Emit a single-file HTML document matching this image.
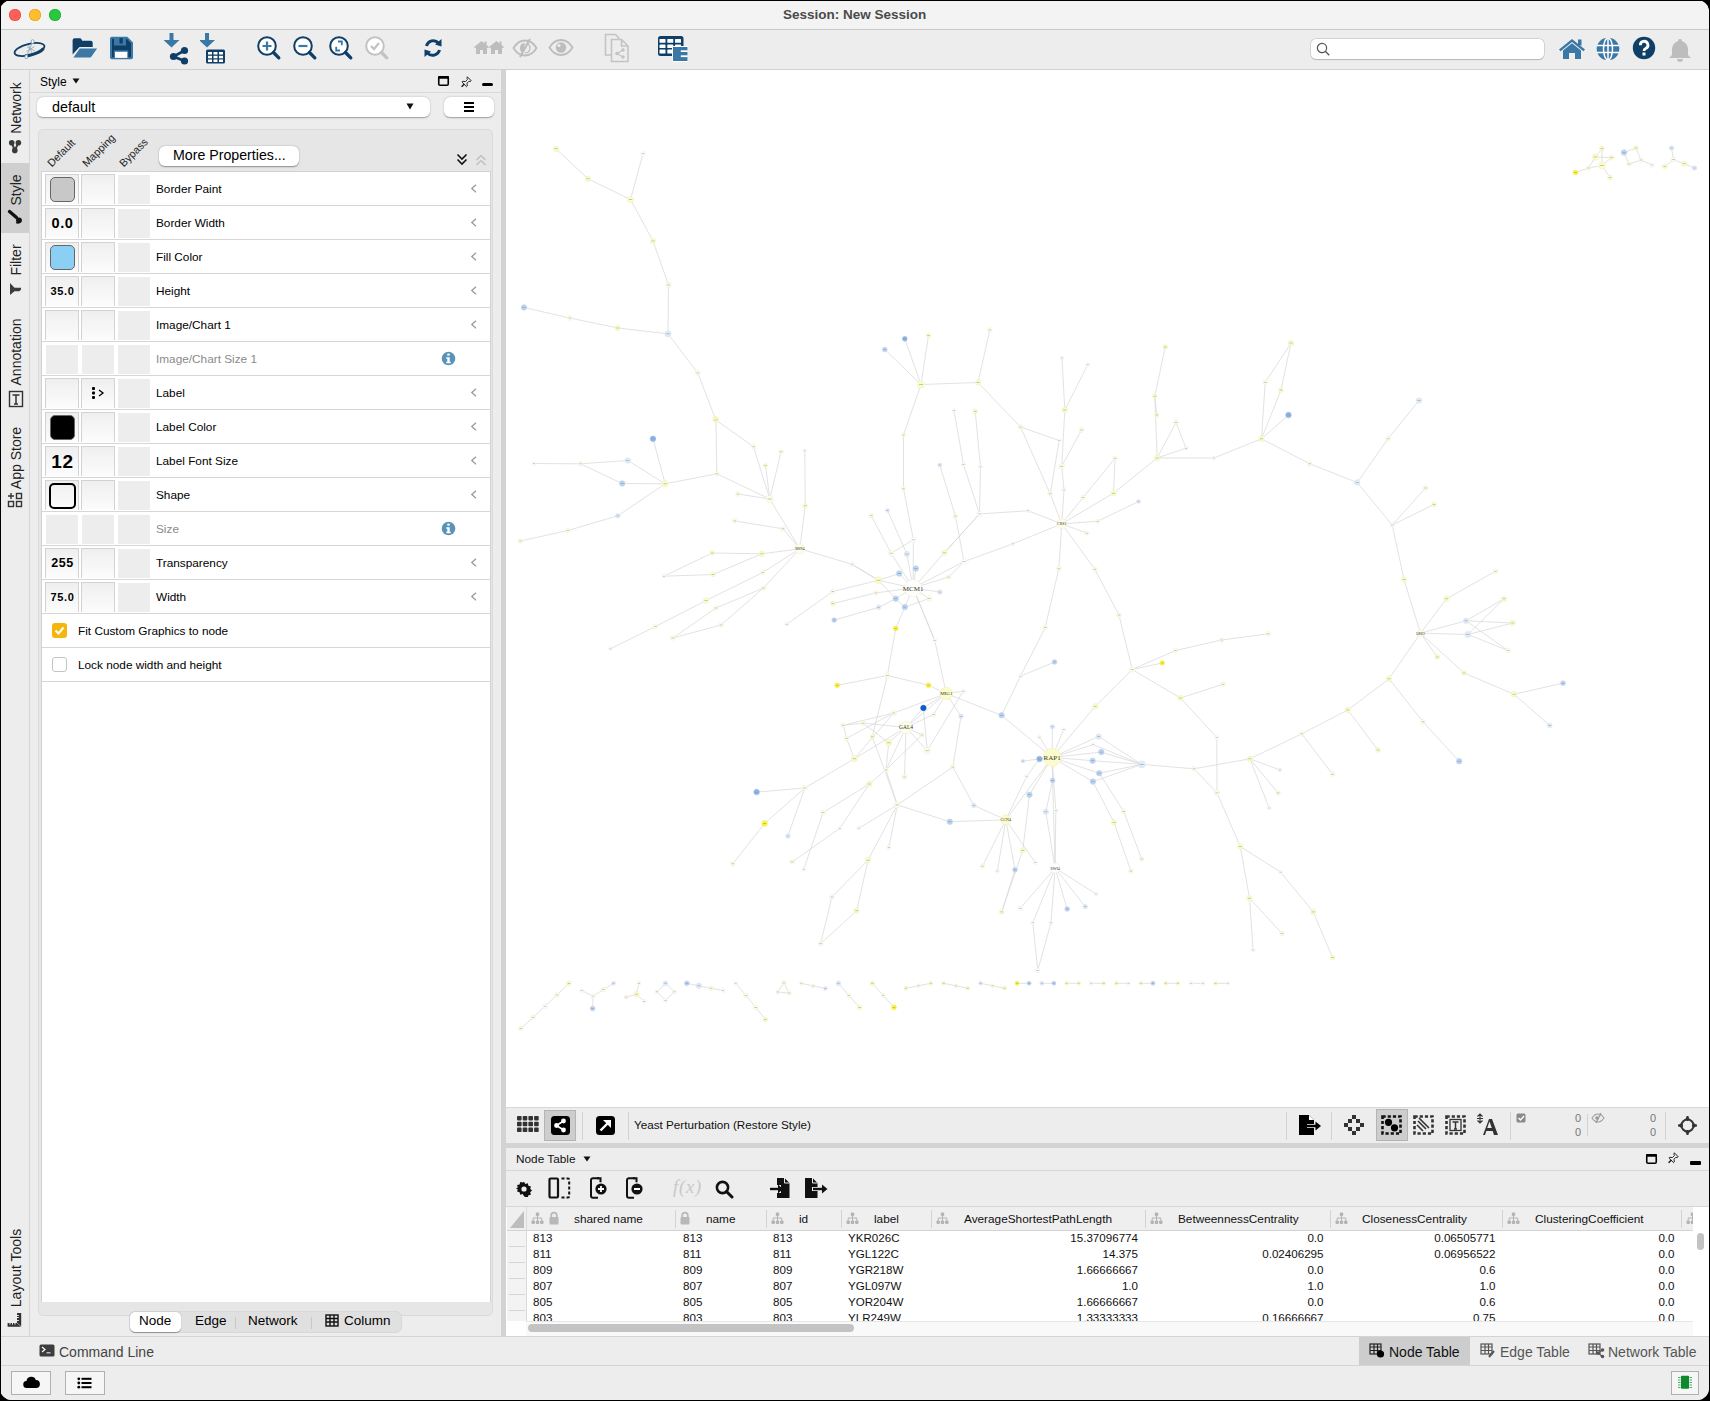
<!DOCTYPE html>
<html><head><meta charset="utf-8">
<style>
*{box-sizing:border-box;margin:0;padding:0}
html,body{width:1710px;height:1401px;overflow:hidden;background:#000}
body{position:relative;font-family:"Liberation Sans",sans-serif;color:#000}
.a{position:absolute}
#win{position:absolute;left:0;top:0;width:1709px;height:1400px;border-radius:12px;overflow:hidden;background:#ededed}
.t{position:absolute;white-space:nowrap;line-height:1}
</style></head><body>
<div id="win">
 <!-- title bar -->
 <div class="a" style="left:0;top:0;width:1709px;height:30px;background:#f3f3f3;border-bottom:1px solid #c9c9c9"></div>
 <div class="a" style="left:9px;top:9px;width:12px;height:12px;border-radius:50%;background:#fe5f57;box-shadow:inset 0 0 0 0.6px #e2463f"></div>
 <div class="a" style="left:29px;top:9px;width:12px;height:12px;border-radius:50%;background:#febc2e;box-shadow:inset 0 0 0 0.6px #df9d1b"></div>
 <div class="a" style="left:49px;top:9px;width:12px;height:12px;border-radius:50%;background:#28c840;box-shadow:inset 0 0 0 0.6px #1aab29"></div>
 <div class="t" style="left:783px;top:8px;font-size:13.5px;font-weight:bold;color:#4a4a4a">Session: New Session</div>
 <!-- toolbar -->
 <div class="a" style="left:0;top:30px;width:1709px;height:40px;background:#ededed;border-bottom:1px solid #d0d0d0"></div>
 <!-- left strip -->
 <div class="a" style="left:0;top:70px;width:30px;height:1266px;background:#ededed;border-right:1px solid #d6d6d6"></div>
 <!-- style panel -->
 <div class="a" style="left:30px;top:70px;width:471px;height:1266px;background:#ededed"></div>
 <!-- splitter -->
 <div class="a" style="left:501px;top:70px;width:5px;height:1266px;background:#d3d3d3"></div>
 <!-- canvas -->
 <div class="a" id="canvas" style="left:506px;top:70px;width:1203px;height:1038px;background:#fff;border-bottom:1px solid #d8d8d8"></div>
 <!-- net toolbar -->
 <div class="a" style="left:506px;top:1108px;width:1203px;height:35px;background:#ededed"></div>
 <div class="a" style="left:506px;top:1143px;width:1203px;height:5px;background:#d3d3d3"></div>
 <!-- table panel -->
 <div class="a" style="left:506px;top:1148px;width:1203px;height:23px;background:#ededed;border-bottom:1px solid #d6d6d6"></div>
 <div class="a" style="left:506px;top:1171px;width:1203px;height:36px;background:#ededed;border-bottom:1px solid #d6d6d6"></div>
 <div class="a" style="left:506px;top:1207px;width:1203px;height:129px;background:#fff"></div>
 <!-- command bar -->
 <div class="a" style="left:0;top:1336px;width:1709px;height:30px;background:#ededed;border-top:1px solid #d4d4d4;border-bottom:1px solid #d4d4d4"></div>
 <div class="a" style="left:0;top:1366px;width:1709px;height:34px;background:#ededed"></div>
<div class="t" style="left:40px;top:76px;font-size:12px;color:#000;">Style</div>
<svg class="a" style="left:72px;top:78px" width="8" height="6"><path d="M0.5 0.5h7l-3.5 5z" fill="#111"/></svg>
<svg class="a" style="left:437px;top:75px" width="13" height="12"><rect x="1.75" y="1.75" width="9.5" height="8.5" rx="1.3" fill="none" stroke="#000" stroke-width="1.6"/><rect x="1" y="1" width="11" height="2.8" rx="1" fill="#000"/></svg>
<svg class="a" style="left:460.5px;top:75.5px" width="12" height="12"><path d="M6.3 0.8L10.2 4.7 9.1 5.6 8 5.2 6 7.2 6.3 10 5.6 10.7 0.9 6 1.6 5.3 4.4 5.6 6.4 3.6 6 2.2Z" fill="none" stroke="#111" stroke-width="0.9" stroke-linejoin="round"/><path d="M3.4 8L0.6 10.8" stroke="#111" stroke-width="1.3"/></svg>
<div class="a" style="left:482px;top:83px;width:11px;height:3px;background:#000;border-radius:1.5px"></div>
<div class="a" style="left:30px;top:92px;width:471px;height:1px;background:#d9d9d9"></div>
<div class="a" style="left:37px;top:97px;width:393px;height:20px;background:#fff;border-radius:6px;box-shadow:0 0.5px 1.5px rgba(0,0,0,0.35)"></div>
<div class="t" style="left:52px;top:100px;font-size:14.4px;color:#000;">default</div>
<svg class="a" style="left:406px;top:103px" width="8" height="7"><path d="M0.5 0.5h7l-3.5 6z" fill="#111"/></svg>
<div class="a" style="left:444px;top:97px;width:50px;height:20px;background:#fff;border-radius:6px;box-shadow:0 0.5px 1.5px rgba(0,0,0,0.35)"></div>
<svg class="a" style="left:463px;top:101px" width="12" height="11"><g fill="#000"><rect x="1" y="1" width="10" height="2"/><rect x="1" y="5" width="10" height="2"/><rect x="1" y="9" width="10" height="2"/></g></svg>
<div class="a" style="left:38px;top:129px;width:455px;height:1187px;background:#e6e6e6;border:1px solid #dadada;border-radius:5px"></div>
<div class="t" style="left:53px;top:158px;font-size:10.7px;color:#222;transform:rotate(-45deg);transform-origin:0 100%">Default</div>
<div class="t" style="left:88px;top:158px;font-size:10.7px;color:#222;transform:rotate(-45deg);transform-origin:0 100%">Mapping</div>
<div class="t" style="left:125px;top:158px;font-size:10.7px;color:#222;transform:rotate(-45deg);transform-origin:0 100%">Bypass</div>
<div class="a" style="left:159px;top:146px;width:140px;height:20px;background:#fff;border-radius:6px;box-shadow:0 0.5px 1.5px rgba(0,0,0,0.4)"></div>
<div class="t" style="left:173px;top:148px;font-size:14.2px;color:#000;">More Properties...</div>
<svg class="a" style="left:456px;top:153px" width="12" height="13"><g fill="none" stroke="#111" stroke-width="1.6"><path d="M1.5 1.5l4.5 4.5 4.5-4.5M1.5 6.5l4.5 4.5 4.5-4.5"/></g></svg>
<svg class="a" style="left:475px;top:154px" width="12" height="13"><g fill="none" stroke="#bbb" stroke-width="1.2"><path d="M1.5 6l4.5-4.5 4.5 4.5M1.5 11l4.5-4.5 4.5 4.5"/></g></svg>
<div class="a" style="left:41px;top:171px;width:450px;height:1131px;background:#fff;border:1px solid #d2d2d2;border-bottom:none"></div>
<div class="a" style="left:45px;top:174px;width:34px;height:30px;border:1px solid #d2d2d2;border-bottom:none;background:linear-gradient(#efefef,#fcfcfc)"></div>
<div class="a" style="left:81px;top:174px;width:34px;height:30px;border:1px solid #d2d2d2;border-bottom:none;background:linear-gradient(#efefef,#fcfcfc)"></div>
<div class="a" style="left:118px;top:175px;width:32px;height:29px;background:#ededed"></div>
<div class="t" style="left:156px;top:184px;font-size:11.8px;color:#000;">Border Paint</div>
<svg class="a" style="left:470px;top:184px" width="8" height="10"><path d="M6 0.8L1.8 4.5 6 8.2" fill="none" stroke="#9a9a9a" stroke-width="1.3"/></svg>
<div class="a" style="left:50px;top:177px;width:25px;height:25px;background:#c8c8c8;border:1px solid #666;border-radius:5px"></div>
<div class="a" style="left:42px;top:205px;width:448px;height:1px;background:#d6d6d6"></div>
<div class="a" style="left:45px;top:208px;width:34px;height:30px;border:1px solid #d2d2d2;border-bottom:none;background:linear-gradient(#efefef,#fcfcfc)"></div>
<div class="a" style="left:81px;top:208px;width:34px;height:30px;border:1px solid #d2d2d2;border-bottom:none;background:linear-gradient(#efefef,#fcfcfc)"></div>
<div class="a" style="left:118px;top:209px;width:32px;height:29px;background:#ededed"></div>
<div class="t" style="left:156px;top:218px;font-size:11.8px;color:#000;">Border Width</div>
<svg class="a" style="left:470px;top:218px" width="8" height="10"><path d="M6 0.8L1.8 4.5 6 8.2" fill="none" stroke="#9a9a9a" stroke-width="1.3"/></svg>
<div class="t" style="left:45px;width:35px;text-align:center;top:223px;font-size:14.5px;font-weight:bold;letter-spacing:0.6px;transform:translateY(-50%);line-height:1">0.0</div>
<div class="a" style="left:42px;top:239px;width:448px;height:1px;background:#d6d6d6"></div>
<div class="a" style="left:45px;top:242px;width:34px;height:30px;border:1px solid #d2d2d2;border-bottom:none;background:linear-gradient(#efefef,#fcfcfc)"></div>
<div class="a" style="left:81px;top:242px;width:34px;height:30px;border:1px solid #d2d2d2;border-bottom:none;background:linear-gradient(#efefef,#fcfcfc)"></div>
<div class="a" style="left:118px;top:243px;width:32px;height:29px;background:#ededed"></div>
<div class="t" style="left:156px;top:252px;font-size:11.8px;color:#000;">Fill Color</div>
<svg class="a" style="left:470px;top:252px" width="8" height="10"><path d="M6 0.8L1.8 4.5 6 8.2" fill="none" stroke="#9a9a9a" stroke-width="1.3"/></svg>
<div class="a" style="left:50px;top:245px;width:25px;height:25px;background:#8bcff4;border:1px solid #666;border-radius:5px"></div>
<div class="a" style="left:42px;top:273px;width:448px;height:1px;background:#d6d6d6"></div>
<div class="a" style="left:45px;top:276px;width:34px;height:30px;border:1px solid #d2d2d2;border-bottom:none;background:linear-gradient(#efefef,#fcfcfc)"></div>
<div class="a" style="left:81px;top:276px;width:34px;height:30px;border:1px solid #d2d2d2;border-bottom:none;background:linear-gradient(#efefef,#fcfcfc)"></div>
<div class="a" style="left:118px;top:277px;width:32px;height:29px;background:#ededed"></div>
<div class="t" style="left:156px;top:286px;font-size:11.8px;color:#000;">Height</div>
<svg class="a" style="left:470px;top:286px" width="8" height="10"><path d="M6 0.8L1.8 4.5 6 8.2" fill="none" stroke="#9a9a9a" stroke-width="1.3"/></svg>
<div class="t" style="left:45px;width:35px;text-align:center;top:291px;font-size:11.0px;font-weight:bold;letter-spacing:0.6px;transform:translateY(-50%);line-height:1">35.0</div>
<div class="a" style="left:42px;top:307px;width:448px;height:1px;background:#d6d6d6"></div>
<div class="a" style="left:45px;top:310px;width:34px;height:30px;border:1px solid #d2d2d2;border-bottom:none;background:linear-gradient(#efefef,#fcfcfc)"></div>
<div class="a" style="left:81px;top:310px;width:34px;height:30px;border:1px solid #d2d2d2;border-bottom:none;background:linear-gradient(#efefef,#fcfcfc)"></div>
<div class="a" style="left:118px;top:311px;width:32px;height:29px;background:#ededed"></div>
<div class="t" style="left:156px;top:320px;font-size:11.8px;color:#000;">Image/Chart 1</div>
<svg class="a" style="left:470px;top:320px" width="8" height="10"><path d="M6 0.8L1.8 4.5 6 8.2" fill="none" stroke="#9a9a9a" stroke-width="1.3"/></svg>
<div class="a" style="left:42px;top:341px;width:448px;height:1px;background:#d6d6d6"></div>
<div class="a" style="left:46px;top:345px;width:32px;height:29px;background:#ededed"></div>
<div class="a" style="left:82px;top:345px;width:32px;height:29px;background:#ededed"></div>
<div class="a" style="left:118px;top:345px;width:32px;height:29px;background:#ededed"></div>
<div class="t" style="left:156px;top:354px;font-size:11.8px;color:#8a8a8a;">Image/Chart Size 1</div>
<svg class="a" style="left:441px;top:351px" width="15" height="15"><circle cx="7.5" cy="7.5" r="6.8" fill="#5b93b8"/><g fill="#fff"><rect x="6.3" y="2.6" width="2.4" height="2"/><path d="M5.3 6.2h3.4v4.6h1v1.5h-4.4v-1.5h1v-3.1h-1z"/></g></svg>
<div class="a" style="left:42px;top:375px;width:448px;height:1px;background:#d6d6d6"></div>
<div class="a" style="left:45px;top:378px;width:34px;height:30px;border:1px solid #d2d2d2;border-bottom:none;background:linear-gradient(#efefef,#fcfcfc)"></div>
<div class="a" style="left:81px;top:378px;width:34px;height:30px;border:1px solid #d2d2d2;border-bottom:none;background:linear-gradient(#efefef,#fcfcfc)"></div>
<div class="a" style="left:118px;top:379px;width:32px;height:29px;background:#ededed"></div>
<div class="t" style="left:156px;top:388px;font-size:11.8px;color:#000;">Label</div>
<svg class="a" style="left:470px;top:388px" width="8" height="10"><path d="M6 0.8L1.8 4.5 6 8.2" fill="none" stroke="#9a9a9a" stroke-width="1.3"/></svg>
<svg class="a" style="left:90px;top:386px" width="16" height="15"><g fill="#000"><rect x="2" y="1" width="3" height="3" rx="1"/><rect x="2" y="5.5" width="3" height="3" rx="1"/><rect x="2" y="10" width="3" height="3" rx="1"/></g><path d="M9 4l4 3-4 3" fill="none" stroke="#000" stroke-width="1.3"/></svg>
<div class="a" style="left:42px;top:409px;width:448px;height:1px;background:#d6d6d6"></div>
<div class="a" style="left:45px;top:412px;width:34px;height:30px;border:1px solid #d2d2d2;border-bottom:none;background:linear-gradient(#efefef,#fcfcfc)"></div>
<div class="a" style="left:81px;top:412px;width:34px;height:30px;border:1px solid #d2d2d2;border-bottom:none;background:linear-gradient(#efefef,#fcfcfc)"></div>
<div class="a" style="left:118px;top:413px;width:32px;height:29px;background:#ededed"></div>
<div class="t" style="left:156px;top:422px;font-size:11.8px;color:#000;">Label Color</div>
<svg class="a" style="left:470px;top:422px" width="8" height="10"><path d="M6 0.8L1.8 4.5 6 8.2" fill="none" stroke="#9a9a9a" stroke-width="1.3"/></svg>
<div class="a" style="left:50px;top:415px;width:25px;height:25px;background:#000;border:1px solid #666;border-radius:5px"></div>
<div class="a" style="left:42px;top:443px;width:448px;height:1px;background:#d6d6d6"></div>
<div class="a" style="left:45px;top:446px;width:34px;height:30px;border:1px solid #d2d2d2;border-bottom:none;background:linear-gradient(#efefef,#fcfcfc)"></div>
<div class="a" style="left:81px;top:446px;width:34px;height:30px;border:1px solid #d2d2d2;border-bottom:none;background:linear-gradient(#efefef,#fcfcfc)"></div>
<div class="a" style="left:118px;top:447px;width:32px;height:29px;background:#ededed"></div>
<div class="t" style="left:156px;top:456px;font-size:11.8px;color:#000;">Label Font Size</div>
<svg class="a" style="left:470px;top:456px" width="8" height="10"><path d="M6 0.8L1.8 4.5 6 8.2" fill="none" stroke="#9a9a9a" stroke-width="1.3"/></svg>
<div class="t" style="left:45px;width:35px;text-align:center;top:461px;font-size:19.0px;font-weight:bold;letter-spacing:0.6px;transform:translateY(-50%);line-height:1">12</div>
<div class="a" style="left:42px;top:477px;width:448px;height:1px;background:#d6d6d6"></div>
<div class="a" style="left:45px;top:480px;width:34px;height:30px;border:1px solid #d2d2d2;border-bottom:none;background:linear-gradient(#efefef,#fcfcfc)"></div>
<div class="a" style="left:81px;top:480px;width:34px;height:30px;border:1px solid #d2d2d2;border-bottom:none;background:linear-gradient(#efefef,#fcfcfc)"></div>
<div class="a" style="left:118px;top:481px;width:32px;height:29px;background:#ededed"></div>
<div class="t" style="left:156px;top:490px;font-size:11.8px;color:#000;">Shape</div>
<svg class="a" style="left:470px;top:490px" width="8" height="10"><path d="M6 0.8L1.8 4.5 6 8.2" fill="none" stroke="#9a9a9a" stroke-width="1.3"/></svg>
<div class="a" style="left:49px;top:483px;width:27px;height:26px;border:2.5px solid #000;border-radius:5px;background:transparent"></div>
<div class="a" style="left:42px;top:511px;width:448px;height:1px;background:#d6d6d6"></div>
<div class="a" style="left:46px;top:515px;width:32px;height:29px;background:#ededed"></div>
<div class="a" style="left:82px;top:515px;width:32px;height:29px;background:#ededed"></div>
<div class="a" style="left:118px;top:515px;width:32px;height:29px;background:#ededed"></div>
<div class="t" style="left:156px;top:524px;font-size:11.8px;color:#8a8a8a;">Size</div>
<svg class="a" style="left:441px;top:521px" width="15" height="15"><circle cx="7.5" cy="7.5" r="6.8" fill="#5b93b8"/><g fill="#fff"><rect x="6.3" y="2.6" width="2.4" height="2"/><path d="M5.3 6.2h3.4v4.6h1v1.5h-4.4v-1.5h1v-3.1h-1z"/></g></svg>
<div class="a" style="left:42px;top:545px;width:448px;height:1px;background:#d6d6d6"></div>
<div class="a" style="left:45px;top:548px;width:34px;height:30px;border:1px solid #d2d2d2;border-bottom:none;background:linear-gradient(#efefef,#fcfcfc)"></div>
<div class="a" style="left:81px;top:548px;width:34px;height:30px;border:1px solid #d2d2d2;border-bottom:none;background:linear-gradient(#efefef,#fcfcfc)"></div>
<div class="a" style="left:118px;top:549px;width:32px;height:29px;background:#ededed"></div>
<div class="t" style="left:156px;top:558px;font-size:11.8px;color:#000;">Transparency</div>
<svg class="a" style="left:470px;top:558px" width="8" height="10"><path d="M6 0.8L1.8 4.5 6 8.2" fill="none" stroke="#9a9a9a" stroke-width="1.3"/></svg>
<div class="t" style="left:45px;width:35px;text-align:center;top:563px;font-size:12.5px;font-weight:bold;letter-spacing:0.6px;transform:translateY(-50%);line-height:1">255</div>
<div class="a" style="left:42px;top:579px;width:448px;height:1px;background:#d6d6d6"></div>
<div class="a" style="left:45px;top:582px;width:34px;height:30px;border:1px solid #d2d2d2;border-bottom:none;background:linear-gradient(#efefef,#fcfcfc)"></div>
<div class="a" style="left:81px;top:582px;width:34px;height:30px;border:1px solid #d2d2d2;border-bottom:none;background:linear-gradient(#efefef,#fcfcfc)"></div>
<div class="a" style="left:118px;top:583px;width:32px;height:29px;background:#ededed"></div>
<div class="t" style="left:156px;top:592px;font-size:11.8px;color:#000;">Width</div>
<svg class="a" style="left:470px;top:592px" width="8" height="10"><path d="M6 0.8L1.8 4.5 6 8.2" fill="none" stroke="#9a9a9a" stroke-width="1.3"/></svg>
<div class="t" style="left:45px;width:35px;text-align:center;top:597px;font-size:11.0px;font-weight:bold;letter-spacing:0.6px;transform:translateY(-50%);line-height:1">75.0</div>
<div class="a" style="left:42px;top:613px;width:448px;height:1px;background:#d6d6d6"></div>
<div class="a" style="left:52px;top:623px;width:15px;height:15px;background:#f5b50c;border-radius:3px"></div>
<svg class="a" style="left:52px;top:623px" width="15" height="15"><path d="M3.5 7.5l3 3 5-6" fill="none" stroke="#fff" stroke-width="2"/></svg>
<div class="t" style="left:78px;top:626px;font-size:11.8px;color:#000;">Fit Custom Graphics to node</div>
<div class="a" style="left:42px;top:647px;width:448px;height:1px;background:#d6d6d6"></div>
<div class="a" style="left:52px;top:657px;width:15px;height:15px;background:#fff;border:1px solid #c4c4c4;border-radius:3px"></div>
<div class="t" style="left:78px;top:660px;font-size:11.8px;color:#000;">Lock node width and height</div>
<div class="a" style="left:42px;top:681px;width:448px;height:1px;background:#d6d6d6"></div>
<div class="a" style="left:129px;top:1311px;width:273px;height:22px;background:#e0e0e0;border-radius:6px;border:1px solid #d8d8d8"></div>
<div class="a" style="left:130px;top:1312px;width:51px;height:20px;background:#fff;border-radius:5px;box-shadow:0 0.5px 1px rgba(0,0,0,0.35)"></div>
<div class="t" style="left:139px;top:1314px;font-size:13.5px;color:#000;">Node</div>
<div class="t" style="left:195px;top:1314px;font-size:13.5px;color:#000;">Edge</div>
<div class="a" style="left:235px;top:1317px;width:1px;height:12px;background:#c8c8c8"></div>
<div class="t" style="left:248px;top:1314px;font-size:13.5px;color:#000;">Network</div>
<div class="a" style="left:311px;top:1317px;width:1px;height:12px;background:#c8c8c8"></div>
<svg class="a" style="left:325px;top:1314px" width="14" height="13"><g fill="none" stroke="#111" stroke-width="1.4"><rect x="1" y="1" width="12" height="11"/><path d="M1 4.5h12M1 8h12M5 1v11M9 1v11"/></g></svg>
<div class="t" style="left:344px;top:1314px;font-size:13.5px;color:#000;">Column</div>
<div class="a" style="left:1px;top:163px;width:28px;height:70px;background:#cfcfcf"></div>
<div class="t" style="left:16px;top:108.0px;font-size:14px;color:#222;transform:translate(-50%,-50%) rotate(-90deg)">Network</div>
<div class="t" style="left:16px;top:189.5px;font-size:14px;color:#222;transform:translate(-50%,-50%) rotate(-90deg)">Style</div>
<div class="t" style="left:16px;top:260.0px;font-size:14px;color:#222;transform:translate(-50%,-50%) rotate(-90deg)">Filter</div>
<div class="t" style="left:16px;top:351.5px;font-size:14px;color:#222;transform:translate(-50%,-50%) rotate(-90deg)">Annotation</div>
<div class="t" style="left:16px;top:457.5px;font-size:14px;color:#222;transform:translate(-50%,-50%) rotate(-90deg)">App Store</div>
<div class="t" style="left:16px;top:1267.5px;font-size:14px;color:#222;transform:translate(-50%,-50%) rotate(-90deg)">Layout Tools</div>
<svg class="a" style="left:8px;top:139px" width="14" height="15"><g fill="#3a3a3a"><circle cx="3.7" cy="3.7" r="2.8"/><circle cx="10.4" cy="3.7" r="2.8"/><circle cx="6.8" cy="11.4" r="2.8"/></g><path d="M3.7 3.7L6.8 11.4 10.4 3.7" fill="none" stroke="#3a3a3a" stroke-width="2"/></svg>
<svg class="a" style="left:7px;top:209px" width="16" height="15"><path d="M2.5 2.5L9.5 8.5" stroke="#111" stroke-width="3.4" stroke-linecap="round"/><circle cx="12" cy="11.3" r="2.9" fill="#111"/><path d="M9 13.5Q11 14.5 12.5 13.5" stroke="#111" stroke-width="1.3" fill="none"/></svg>
<svg class="a" style="left:9px;top:282px" width="13" height="14"><path d="M1 1L5.5 5.8H12V7.8L10.3 9.3H5.5L1 13z" fill="#3d3d3d"/></svg>
<svg class="a" style="left:8px;top:390px" width="16" height="18"><rect x="1.5" y="1.5" width="13" height="15" fill="none" stroke="#333" stroke-width="1.4"/><path d="M4.5 5h7M8 5v9M6 14h4" stroke="#333" stroke-width="1.5" fill="none"/></svg>
<svg class="a" style="left:7px;top:492px" width="17" height="16"><g fill="none" stroke="#333" stroke-width="1.4"><rect x="1.5" y="9.5" width="5" height="5"/><rect x="9.5" y="9.5" width="5" height="5"/><rect x="9.5" y="1.5" width="5" height="5"/><path d="M4 1v6M1 4h6"/></g></svg>
<svg class="a" style="left:7px;top:1312px" width="15" height="16"><rect x="10" y="1" width="4.2" height="13" rx="0.6" fill="#333"/><rect x="0.6" y="11" width="13.2" height="3.8" rx="0.6" fill="#333"/><g stroke="#ededed" stroke-width="1"><path d="M10 3.5h1.8M10 5.5h1.8M10 8.5h1.8M3 11v1.6M5.5 11v1.6M8 11v1.6"/><path d="M9.8 10.8L14.3 14.8" stroke="#aaa" stroke-width="0.9"/></g></svg>
<svg class="a" style="left:12px;top:39px" width="36" height="21" viewBox="0 0 36 21"><g transform="rotate(-14 17.5 10.5)"><ellipse cx="17.5" cy="10.5" rx="15.3" ry="5.6" fill="none" stroke="#0f3f66" stroke-width="1.8"/><ellipse cx="17.5" cy="10.5" rx="15.3" ry="5.6" fill="none" stroke="#0f3f66" stroke-width="3" stroke-dasharray="0 3 20 100"/></g><g stroke="#8aa5bb" stroke-width="0.8" fill="none"><path d="M20.5 3l-6 14.5M15 8l8 4M14.5 12.5l8-5M16.5 6l3.5 8"/></g><g fill="#fff" stroke="#7f9cb3" stroke-width="0.9"><rect x="19.3" y="0.8" width="2.6" height="3.6" rx="1"/><rect x="13" y="16" width="2.6" height="3.6" rx="1"/></g></svg>
<svg class="a" style="left:71px;top:37px" width="28" height="22" viewBox="0 0 28 22"><path d="M1.6 3.2a2 2 0 0 1 2-2h5.2a2 2 0 0 1 1.8 1.2l.6 1.4h8.5a2 2 0 0 1 2 2V10H8.5L1.6 17.5z" fill="#0f3f66"/><path d="M8.8 11.5h17.3L20.5 19.6a2 2 0 0 1-1.6.9H2.4z" fill="#3b78a5"/></svg>
<svg class="a" style="left:109px;top:36px" width="25" height="24" viewBox="0 0 25 24"><path d="M1 2.6A1.8 1.8 0 0 1 2.8.8h15.5L24 6.5v14.9a1.8 1.8 0 0 1-1.8 1.8H2.8A1.8 1.8 0 0 1 1 21.4z" fill="#3b78a5"/><path d="M3 2.8h14.7L22 7.2v14H3z" fill="#0f3f66"/><rect x="5" y="1.5" width="12" height="8" fill="#3b78a5"/><rect x="10.5" y="2.2" width="3.2" height="5.3" fill="#0f3f66"/><rect x="4.8" y="14.3" width="14.5" height="7.6" fill="#3b78a5"/><rect x="6" y="15.8" width="12.3" height="6.1" fill="#fff"/></svg>
<svg class="a" style="left:164px;top:33px" width="26" height="32" viewBox="0 0 26 32"><path d="M5.5 0h4v7h6l-8 7.5-8-7.5h6z" fill="#3b78a5"/><g fill="#0f3f66"><circle cx="20.5" cy="17.5" r="3.6"/><circle cx="9.5" cy="23.5" r="3.6"/><circle cx="20.5" cy="28" r="3.6"/></g><path d="M20.5 17.5L9.5 23.5 20.5 28" stroke="#0f3f66" stroke-width="2.6" fill="none"/></svg>
<svg class="a" style="left:200px;top:33px" width="26" height="32" viewBox="0 0 26 32"><path d="M5 0h4v7h6l-8 7.5-8-7.5h6z" fill="#3b78a5"/><rect x="6" y="16.5" width="19" height="14" rx="1.5" fill="#0f3f66"/><g fill="#fff"><rect x="8" y="19" width="4" height="2.5"/><rect x="13.5" y="19" width="4" height="2.5"/><rect x="19" y="19" width="4" height="2.5"/><rect x="8" y="22.8" width="4" height="2.5"/><rect x="13.5" y="22.8" width="4" height="2.5"/><rect x="19" y="22.8" width="4" height="2.5"/><rect x="8" y="26.5" width="4" height="2.5"/><rect x="13.5" y="26.5" width="4" height="2.5"/><rect x="19" y="26.5" width="4" height="2.5"/></g></svg>
<svg class="a" style="left:256px;top:34px" width="26" height="28" viewBox="0 0 26 28"><circle cx="11" cy="12" r="8.8" fill="#fff" stroke="#0f3f66" stroke-width="2"/><path d="M17.5 18.5l5.3 5.3" stroke="#0f3f66" stroke-width="3.3" stroke-linecap="round"/><path d="M11 7.5v9M6.5 12h9" stroke="#3b78a5" stroke-width="2.2"/></svg>
<svg class="a" style="left:292px;top:34px" width="26" height="28" viewBox="0 0 26 28"><circle cx="11" cy="12" r="8.8" fill="#fff" stroke="#0f3f66" stroke-width="2"/><path d="M17.5 18.5l5.3 5.3" stroke="#0f3f66" stroke-width="3.3" stroke-linecap="round"/><path d="M6.5 12h9" stroke="#3b78a5" stroke-width="2.2"/></svg>
<svg class="a" style="left:328px;top:34px" width="26" height="28" viewBox="0 0 26 28"><circle cx="11" cy="12" r="8.8" fill="#fff" stroke="#0f3f66" stroke-width="2"/><path d="M17.5 18.5l5.3 5.3" stroke="#0f3f66" stroke-width="3.3" stroke-linecap="round"/><path d="M10 7.5h3.8v3.8M12 16.5H8.2v-3.8" stroke="#3b78a5" stroke-width="1.8" fill="none"/></svg>
<svg class="a" style="left:364px;top:34px" width="26" height="28" viewBox="0 0 26 28"><circle cx="11" cy="12" r="8.8" fill="#fff" stroke="#c3c3c3" stroke-width="2"/><path d="M17.5 18.5l5.3 5.3" stroke="#c3c3c3" stroke-width="3.3" stroke-linecap="round"/><path d="M7 12l3 3 5-6" stroke="#c3c3c3" stroke-width="2.2" fill="none"/></svg>
<svg class="a" style="left:423px;top:38px" width="20" height="20" viewBox="0 0 20 20"><path d="M3.5 8A7 7 0 0 1 15.5 5" stroke="#0f3f66" stroke-width="3" fill="none"/><path d="M12 6.5L18.5 8.5V1z" fill="#0f3f66"/><path d="M16.5 12A7 7 0 0 1 4.5 15" stroke="#0f3f66" stroke-width="3" fill="none"/><path d="M8 13.5L1.5 11.5V19z" fill="#0f3f66"/></svg>
<svg class="a" style="left:473px;top:40px" width="33" height="16" viewBox="0 0 33 16"><path d="M1 7l7.5-6 7.5 6-1 1.2-1-.8V14h-4v-4h-3v4h-4V7.4l-1 .8z" fill="#bdbdbd"/><rect x="11.5" y="1.5" width="2" height="4" fill="#bdbdbd"/><path d="M16 7l7.5-6 7.5 6-1 1.2-1-.8V14h-4v-4h-3v4h-4V7.4l-1 .8z" fill="#bdbdbd"/><rect x="26.5" y="1.5" width="2" height="4" fill="#bdbdbd"/></svg>
<svg class="a" style="left:512px;top:38px" width="26" height="20" viewBox="0 0 26 20"><path d="M1.5 10C5 4 10 2.5 13 2.5S21 4 24.5 10C21 16 16 17.5 13 17.5S5 16 1.5 10z" fill="none" stroke="#bdbdbd" stroke-width="1.8"/><path d="M13 5a5 5 0 0 0-2 9.6z" fill="#bdbdbd"/><path d="M18 1L8 19" stroke="#bdbdbd" stroke-width="2.2"/><path d="M16 6a5 5 0 0 1-3 9" stroke="#bdbdbd" stroke-width="1.3" fill="none"/></svg>
<svg class="a" style="left:548px;top:38px" width="26" height="19" viewBox="0 0 26 19"><path d="M1.5 9.5C5 3.5 10 2 13 2S21 3.5 24.5 9.5C21 15.5 16 17 13 17S5 15.5 1.5 9.5z" fill="none" stroke="#bdbdbd" stroke-width="1.8"/><circle cx="13" cy="9.5" r="5.2" fill="#bdbdbd"/><circle cx="11" cy="7.5" r="1.6" fill="#ededed"/></svg>
<svg class="a" style="left:603px;top:33px" width="28" height="30" viewBox="0 0 28 30"><path d="M2.5 1.5h10l3 3V22h-13z" fill="none" stroke="#c4c4c4" stroke-width="1.6"/><path d="M8.5 6.5h10l6.5 6.5v15.5h-16.5z" fill="#ededed" stroke="#c4c4c4" stroke-width="1.6"/><path d="M18.5 6.5v6.5H25" fill="none" stroke="#c4c4c4" stroke-width="1.6"/><g fill="#c4c4c4"><circle cx="20" cy="17" r="1.8"/><circle cx="14" cy="20.5" r="1.8"/><circle cx="20" cy="24" r="1.8"/></g><path d="M20 17l-6 3.5 6 3.5" stroke="#c4c4c4" stroke-width="1.2" fill="none"/></svg>
<svg class="a" style="left:657px;top:35px" width="31" height="27" viewBox="0 0 31 27"><rect x="1" y="1" width="25.5" height="20" rx="2.5" fill="#0f3f66"/><g fill="#fff"><rect x="2.5" y="4" width="6" height="3.8" rx="0.6"/><rect x="10.3" y="4" width="6" height="3.8" rx="0.6"/><rect x="18" y="4" width="6" height="3.8" rx="0.6"/><rect x="2.5" y="9.5" width="6" height="3.5" rx="0.6"/><rect x="10.3" y="9.5" width="6" height="3.5" rx="0.6"/><rect x="18" y="9.5" width="6" height="3.5" rx="0.6"/><rect x="2.5" y="14.5" width="6" height="4" rx="0.6"/><rect x="10.3" y="14.5" width="6" height="4" rx="0.6"/></g><rect x="15" y="11" width="16" height="16" fill="#fff"/><rect x="16" y="12" width="14.5" height="14" fill="#3b78a5"/><g fill="#fff"><rect x="23.8" y="15.3" width="7" height="1.7"/><rect x="23.8" y="20.3" width="7" height="1.8"/></g></svg>
<div class="a" style="left:1311px;top:39px;width:233px;height:20px;background:#fff;border-radius:5px;box-shadow:0 0 0 0.5px #bdbdbd,0 0.5px 1px rgba(0,0,0,0.25)"></div>
<svg class="a" style="left:1316px;top:42px" width="15" height="15" viewBox="0 0 15 15"><circle cx="6" cy="6" r="4.6" fill="none" stroke="#555" stroke-width="1.2"/><path d="M9.3 9.3l4 4" stroke="#555" stroke-width="1.3"/></svg>
<svg class="a" style="left:1558px;top:38px" width="28" height="22" viewBox="0 0 28 22"><path d="M1 11.5L14 1l13 10.5-1.6 1.8L14 4 2.6 13.3z" fill="#3b78a5"/><rect x="20" y="1.5" width="3.5" height="6" fill="#3b78a5"/><path d="M5 12.5L14 5.2l9 7.3V21h-6v-6h-6v6H5z" fill="#3b78a5"/></svg>
<svg class="a" style="left:1596px;top:37px" width="24" height="24" viewBox="0 0 24 24"><circle cx="12" cy="12" r="11.3" fill="#3b78a5"/><g fill="none" stroke="#fff" stroke-width="1.5"><ellipse cx="12" cy="12" rx="4.5" ry="11"/><path d="M12 1v22M1 8.5h22M1 15.5h22"/></g></svg>
<svg class="a" style="left:1632px;top:36px" width="24" height="24" viewBox="0 0 24 24"><circle cx="12" cy="12" r="11.2" fill="#0f3f66"/><path d="M8.3 9.2a3.8 3.8 0 1 1 5.4 3.3c-1.2.6-1.7 1.2-1.7 2.5" fill="none" stroke="#fff" stroke-width="2.8"/><rect x="10.5" y="16.5" width="3" height="3" fill="#fff"/></svg>
<svg class="a" style="left:1668px;top:37px" width="24" height="26" viewBox="0 0 24 26"><path d="M12 2a2 2 0 0 1 2 2.2c4 1 6 4.5 6 8.8v5l3 3H1l3-3v-5c0-4.3 2-7.8 6-8.8A2 2 0 0 1 12 2z" fill="#bdbdbd"/><path d="M9 22a3 3 0 0 0 6 0z" fill="#bdbdbd"/></svg>
<svg class="a" style="left:506px;top:70px" width="1203" height="1037" viewBox="506 70 1203 1037">
<g stroke="#d5d5d5" stroke-width="0.7" fill="none">
<path d="M556.0 148.8L588.0 178.8"/>
<path d="M588.0 178.8L630.5 199.5"/>
<path d="M630.5 199.5L653.0 241.0"/>
<path d="M653.0 241.0L668.5 285.0"/>
<path d="M668.5 285.0L668.0 333.8"/>
<path d="M668.0 333.8L617.8 328.0"/>
<path d="M617.8 328.0L569.8 318.0"/>
<path d="M569.8 318.0L524.0 307.5"/>
<path d="M643.0 153.8L630.5 199.5"/>
<path d="M668.0 333.8L697.8 373.0"/>
<path d="M697.8 373.0L715.5 419.0"/>
<path d="M921.0 384.5L928.5 335.5"/>
<path d="M921.0 384.5L904.8 338.8"/>
<path d="M921.0 384.5L978.0 382.5"/>
<path d="M978.0 382.5L989.8 330.0"/>
<path d="M1062.0 358.0L1064.8 410.0"/>
<path d="M1087.8 364.5L1064.8 410.0"/>
<path d="M1165.2 347.0L1154.8 396.2"/>
<path d="M1154.8 396.2L1156.8 415.0"/>
<path d="M1291.0 343.0L1265.2 382.5"/>
<path d="M1291.0 343.0L1281.0 390.0"/>
<path d="M884.8 349.5L921.0 384.5"/>
<path d="M1575.5 172.5L1588.5 168.0"/>
<path d="M1588.5 168.0L1595.5 157.0"/>
<path d="M1595.5 157.0L1602.0 148.5"/>
<path d="M1602.0 148.5L1602.0 165.5"/>
<path d="M1602.0 165.5L1611.5 157.5"/>
<path d="M1611.5 157.5L1595.5 157.0"/>
<path d="M1588.5 168.0L1602.0 165.5"/>
<path d="M1602.0 165.5L1610.0 177.5"/>
<path d="M1624.0 152.5L1636.0 148.0"/>
<path d="M1636.0 148.0L1641.0 160.0"/>
<path d="M1641.0 160.0L1629.0 164.0"/>
<path d="M1629.0 164.0L1624.0 152.5"/>
<path d="M1641.0 160.0L1652.0 165.0"/>
<path d="M1671.5 148.0L1673.5 159.5"/>
<path d="M1673.5 159.5L1664.8 166.5"/>
<path d="M1673.5 159.5L1684.2 163.8"/>
<path d="M1684.2 163.8L1694.5 168.0"/>
<path d="M715.5 419.0L716.0 420.0"/>
<path d="M716.0 420.0L716.8 473.8"/>
<path d="M716.8 473.8L769.8 499.0"/>
<path d="M716.0 420.0L753.5 446.8"/>
<path d="M753.5 446.8L769.8 499.0"/>
<path d="M781.0 451.8L769.8 499.0"/>
<path d="M765.5 465.5L769.8 499.0"/>
<path d="M716.8 473.8L665.2 483.8"/>
<path d="M653.0 438.8L665.2 483.8"/>
<path d="M627.8 460.5L665.2 483.8"/>
<path d="M627.8 460.5L580.5 463.8"/>
<path d="M580.5 463.8L534.0 463.5"/>
<path d="M580.5 463.8L622.2 483.5"/>
<path d="M622.2 483.5L665.2 483.8"/>
<path d="M665.2 483.8L617.8 515.8"/>
<path d="M617.8 515.8L567.8 530.5"/>
<path d="M567.8 530.5L520.5 541.0"/>
<path d="M738.0 494.0L769.8 499.0"/>
<path d="M769.8 499.0L799.8 548.8"/>
<path d="M804.8 450.8L805.2 505.8"/>
<path d="M805.2 505.8L799.8 548.8"/>
<path d="M734.8 521.0L783.0 528.8"/>
<path d="M783.0 528.8L799.8 548.8"/>
<path d="M799.8 548.8L761.8 553.8"/>
<path d="M761.8 553.8L712.2 553.0"/>
<path d="M712.2 553.0L664.0 576.2"/>
<path d="M664.0 576.2L713.0 574.5"/>
<path d="M713.0 574.5L761.8 553.8"/>
<path d="M799.8 548.8L762.8 572.5"/>
<path d="M762.8 572.5L706.0 600.5"/>
<path d="M706.0 600.5L655.5 626.5"/>
<path d="M655.5 626.5L610.5 648.8"/>
<path d="M799.8 548.8L763.5 588.0"/>
<path d="M763.5 588.0L716.0 608.0"/>
<path d="M716.0 608.0L672.8 638.0"/>
<path d="M672.8 638.0L721.0 625.0"/>
<path d="M721.0 625.0L763.5 588.0"/>
<path d="M799.8 548.8L852.0 564.2"/>
<path d="M852.0 564.2L878.4 580.3"/>
<path d="M786.8 624.2L832.8 591.5"/>
<path d="M871.2 515.7L891.2 553.2"/>
<path d="M891.2 553.2L913.1 588.0"/>
<path d="M887.5 510.4L906.9 554.1"/>
<path d="M906.9 554.1L913.1 588.0"/>
<path d="M913.4 539.8L891.2 553.2"/>
<path d="M913.4 539.8L913.1 588.0"/>
<path d="M944.4 552.8L913.1 588.0"/>
<path d="M944.4 552.8L979.5 513.9"/>
<path d="M955.4 516.1L964.0 561.6"/>
<path d="M964.0 561.6L913.1 588.0"/>
<path d="M964.0 561.6L948.5 577.1"/>
<path d="M948.5 577.1L913.1 588.0"/>
<path d="M851.9 564.2L878.4 580.3"/>
<path d="M878.4 580.3L899.2 573.6"/>
<path d="M899.2 573.6L913.1 588.0"/>
<path d="M878.4 580.3L913.1 588.0"/>
<path d="M878.4 580.3L832.8 591.5"/>
<path d="M878.4 580.3L895.7 598.7"/>
<path d="M915.8 568.5L913.1 588.0"/>
<path d="M832.8 603.6L875.9 592.9"/>
<path d="M875.9 592.9L913.1 588.0"/>
<path d="M895.7 598.7L913.1 588.0"/>
<path d="M895.7 598.7L904.8 607.1"/>
<path d="M904.8 607.1L913.1 588.0"/>
<path d="M878.6 607.3L834.2 620.1"/>
<path d="M878.6 607.3L895.7 598.7"/>
<path d="M904.8 607.1L929.0 598.5"/>
<path d="M904.8 607.1L895.7 628.5"/>
<path d="M913.1 588.0L939.9 592.1"/>
<path d="M913.1 588.0L929.0 598.5"/>
<path d="M913.1 588.0L934.8 640.5"/>
<path d="M1020.5 427.0L1059.2 440.5"/>
<path d="M1020.5 427.0L1050.2 493.8"/>
<path d="M1059.2 440.5L1050.2 493.8"/>
<path d="M1064.8 410.0L1061.8 466.2"/>
<path d="M1081.5 430.0L1061.8 466.2"/>
<path d="M1061.8 466.2L1064.0 490.0"/>
<path d="M1064.0 490.0L1061.8 523.8"/>
<path d="M1050.2 493.8L1061.8 523.8"/>
<path d="M1115.0 458.2L1083.0 497.5"/>
<path d="M1083.0 497.5L1061.8 523.8"/>
<path d="M1115.0 458.2L1113.5 493.2"/>
<path d="M1113.5 493.2L1061.8 523.8"/>
<path d="M1113.5 493.2L1157.2 458.0"/>
<path d="M1138.5 501.5L1097.8 521.2"/>
<path d="M1097.8 521.2L1061.8 523.8"/>
<path d="M1086.8 533.2L1061.8 523.8"/>
<path d="M1028.0 510.8L1061.8 523.8"/>
<path d="M1028.0 510.8L979.5 513.9"/>
<path d="M979.5 513.9L980.5 466.8"/>
<path d="M980.5 466.8L975.2 411.2"/>
<path d="M963.5 464.5L979.5 513.9"/>
<path d="M963.5 464.5L954.0 410.5"/>
<path d="M939.8 465.0L955.4 516.1"/>
<path d="M979.5 513.9L944.4 552.8"/>
<path d="M1061.8 523.8L1013.0 543.8"/>
<path d="M1013.0 543.8L964.0 561.6"/>
<path d="M1061.8 523.8L1058.8 568.8"/>
<path d="M1058.8 568.8L1045.2 627.5"/>
<path d="M1045.2 627.5L1020.5 676.2"/>
<path d="M1020.5 676.2L1054.5 662.0"/>
<path d="M1020.5 676.2L1001.6 715.3"/>
<path d="M1061.8 523.8L1094.8 569.2"/>
<path d="M1094.8 569.2L1119.0 615.0"/>
<path d="M1119.0 615.0L1132.2 669.5"/>
<path d="M1132.2 669.5L1175.5 650.5"/>
<path d="M1175.5 650.5L1221.8 640.0"/>
<path d="M1221.8 640.0L1268.0 633.8"/>
<path d="M1132.2 669.5L1095.3 706.3"/>
<path d="M1132.2 669.5L1180.5 698.0"/>
<path d="M1180.5 698.0L1223.0 684.2"/>
<path d="M1180.5 698.0L1216.8 737.5"/>
<path d="M1216.8 737.5L1217.0 792.9"/>
<path d="M1157.2 458.0L1176.0 422.5"/>
<path d="M1176.0 422.5L1186.0 448.2"/>
<path d="M1186.0 448.2L1157.2 458.0"/>
<path d="M1157.2 458.0L1214.0 458.0"/>
<path d="M1214.0 458.0L1261.5 438.8"/>
<path d="M1261.5 438.8L1309.8 463.8"/>
<path d="M1157.2 458.0L1154.8 396.2"/>
<path d="M913.1 588.0L934.8 640.5"/>
<path d="M934.8 640.5L946.3 693.5"/>
<path d="M1162.2 663.0L1132.2 669.5"/>
<path d="M1194.0 768.8L1249.8 758.8"/>
<path d="M1249.8 758.8L1301.8 733.8"/>
<path d="M1141.8 764.4L1194.0 768.8"/>
<path d="M1419.0 400.5L1388.0 438.8"/>
<path d="M1388.0 438.8L1357.2 482.5"/>
<path d="M1357.2 482.5L1309.8 463.8"/>
<path d="M1357.2 482.5L1392.2 525.0"/>
<path d="M1392.2 525.0L1425.5 488.0"/>
<path d="M1392.2 525.0L1434.0 504.5"/>
<path d="M1392.2 525.0L1404.0 579.5"/>
<path d="M1404.0 579.5L1420.5 633.2"/>
<path d="M1420.5 633.2L1446.5 598.8"/>
<path d="M1446.5 598.8L1495.5 571.2"/>
<path d="M1420.5 633.2L1466.0 620.8"/>
<path d="M1420.5 633.2L1467.8 634.5"/>
<path d="M1466.0 620.8L1504.0 598.8"/>
<path d="M1466.0 620.8L1512.8 623.0"/>
<path d="M1466.0 620.8L1508.0 650.5"/>
<path d="M1467.8 634.5L1504.0 598.8"/>
<path d="M1467.8 634.5L1512.8 623.0"/>
<path d="M1467.8 634.5L1508.0 650.5"/>
<path d="M1420.5 633.2L1437.2 657.0"/>
<path d="M1420.5 633.2L1464.0 673.0"/>
<path d="M1464.0 673.0L1514.0 694.2"/>
<path d="M1514.0 694.2L1563.0 683.2"/>
<path d="M1514.0 694.2L1549.8 725.5"/>
<path d="M1420.5 633.2L1389.0 678.8"/>
<path d="M1389.0 678.8L1347.8 710.0"/>
<path d="M1347.8 710.0L1378.0 750.0"/>
<path d="M1389.0 678.8L1423.0 721.8"/>
<path d="M1423.0 721.8L1459.2 761.2"/>
<path d="M1347.8 710.0L1301.8 733.8"/>
<path d="M1301.8 733.8L1332.5 774.3"/>
<path d="M1313.2 911.9L1332.5 957.6"/>
<path d="M1280.7 872.2L1313.2 911.9"/>
<path d="M887.4 675.5L837.2 685.3"/>
<path d="M887.4 675.5L928.6 685.3"/>
<path d="M928.6 685.3L946.3 693.5"/>
<path d="M887.4 675.5L872.3 736.8"/>
<path d="M946.3 693.5L963.2 691.3"/>
<path d="M946.3 693.5L923.4 707.9"/>
<path d="M923.4 707.9L906.0 727.4"/>
<path d="M946.3 693.5L893.7 713.0"/>
<path d="M893.7 713.0L843.2 725.3"/>
<path d="M843.2 725.3L863.2 723.2"/>
<path d="M863.2 723.2L906.0 727.4"/>
<path d="M946.3 693.5L933.7 714.5"/>
<path d="M933.7 714.5L906.0 727.4"/>
<path d="M946.3 693.5L906.0 727.4"/>
<path d="M946.3 693.5L961.0 716.3"/>
<path d="M961.0 716.3L952.8 767.1"/>
<path d="M946.3 693.5L1001.6 715.3"/>
<path d="M963.2 691.3L927.2 750.7"/>
<path d="M923.4 707.9L927.2 750.7"/>
<path d="M893.7 713.0L854.4 758.7"/>
<path d="M863.2 723.2L888.7 742.8"/>
<path d="M846.6 738.4L893.7 713.0"/>
<path d="M843.2 725.3L846.6 738.4"/>
<path d="M846.6 738.4L854.4 758.7"/>
<path d="M854.4 758.7L906.0 727.4"/>
<path d="M906.0 727.4L921.9 735.0"/>
<path d="M906.0 727.4L927.2 750.7"/>
<path d="M906.0 727.4L888.7 742.8"/>
<path d="M888.7 742.8L886.0 770.0"/>
<path d="M906.0 727.4L886.0 770.0"/>
<path d="M906.0 727.4L904.5 777.0"/>
<path d="M921.9 735.0L886.0 770.0"/>
<path d="M886.0 770.0L869.2 784.0"/>
<path d="M872.3 736.8L897.3 804.9"/>
<path d="M895.7 628.5L887.4 675.5"/>
<path d="M952.8 767.1L897.3 804.9"/>
<path d="M756.6 792.1L804.8 788.0"/>
<path d="M804.8 788.0L764.6 823.4"/>
<path d="M764.6 823.4L732.8 863.8"/>
<path d="M804.8 788.0L787.9 836.1"/>
<path d="M804.8 788.0L854.4 758.7"/>
<path d="M869.2 784.0L823.0 812.6"/>
<path d="M823.0 812.6L803.8 869.3"/>
<path d="M869.2 784.0L839.8 828.4"/>
<path d="M839.8 828.4L792.2 861.9"/>
<path d="M886.0 770.0L897.3 804.9"/>
<path d="M897.3 804.9L858.9 828.2"/>
<path d="M897.3 804.9L868.0 860.2"/>
<path d="M897.3 804.9L888.9 847.4"/>
<path d="M868.0 860.2L831.9 897.0"/>
<path d="M831.9 897.0L820.6 943.7"/>
<path d="M868.0 860.2L856.7 910.7"/>
<path d="M856.7 910.7L820.6 943.7"/>
<path d="M1052.1 757.4L1001.6 715.3"/>
<path d="M1052.1 757.4L1095.3 706.3"/>
<path d="M1052.1 757.4L1052.4 726.8"/>
<path d="M1052.1 757.4L1063.7 729.5"/>
<path d="M1052.1 757.4L1039.5 737.2"/>
<path d="M1052.1 757.4L1098.6 736.5"/>
<path d="M1052.1 757.4L1093.2 744.7"/>
<path d="M1052.1 757.4L1101.3 752.1"/>
<path d="M1052.1 757.4L1092.6 760.7"/>
<path d="M1052.1 757.4L1099.2 773.2"/>
<path d="M1052.1 757.4L1092.9 781.6"/>
<path d="M1052.1 757.4L1039.5 758.9"/>
<path d="M1052.1 757.4L1052.6 780.5"/>
<path d="M1052.1 757.4L1029.5 794.7"/>
<path d="M1052.1 757.4L1055.8 810.7"/>
<path d="M1098.6 736.5L1141.8 764.4"/>
<path d="M1093.2 744.7L1141.8 764.4"/>
<path d="M1101.3 752.1L1141.8 764.4"/>
<path d="M1092.6 760.7L1141.8 764.4"/>
<path d="M1099.2 773.2L1141.8 764.4"/>
<path d="M1092.9 781.6L1141.8 764.4"/>
<path d="M1039.5 758.9L1022.9 761.1"/>
<path d="M1039.5 758.9L1026.8 776.3"/>
<path d="M1026.8 776.3L1005.8 819.8"/>
<path d="M1052.1 757.4L1005.8 819.8"/>
<path d="M1052.6 780.5L1045.8 811.8"/>
<path d="M1099.2 773.2L1123.7 811.4"/>
<path d="M1092.9 781.6L1114.0 822.4"/>
<path d="M897.3 804.9L949.8 821.7"/>
<path d="M949.8 821.7L1005.8 819.8"/>
<path d="M973.8 805.4L1005.8 819.8"/>
<path d="M973.8 805.4L952.8 767.1"/>
<path d="M1005.8 819.8L982.5 866.2"/>
<path d="M1005.8 819.8L997.4 871.0"/>
<path d="M1005.8 819.8L1015.0 869.8"/>
<path d="M1005.8 819.8L1035.4 862.6"/>
<path d="M1029.5 794.7L1022.7 850.6"/>
<path d="M1022.7 850.6L1001.7 911.9"/>
<path d="M1015.0 869.8L1001.7 911.9"/>
<path d="M1045.8 811.8L1055.1 868.1"/>
<path d="M1055.8 810.7L1055.1 868.1"/>
<path d="M1052.6 780.5L1055.1 868.1"/>
<path d="M1055.1 868.1L1096.0 893.9"/>
<path d="M1055.1 868.1L1020.3 908.3"/>
<path d="M1055.1 868.1L1067.2 909.0"/>
<path d="M1055.1 868.1L1085.2 906.6"/>
<path d="M1055.1 868.1L1032.8 922.7"/>
<path d="M1032.8 922.7L1037.8 970.4"/>
<path d="M1055.1 868.1L1051.0 922.7"/>
<path d="M1051.0 922.7L1037.8 970.4"/>
<path d="M1114.0 822.4L1130.9 871.0"/>
<path d="M1123.7 811.4L1141.7 859.0"/>
<path d="M1194.0 768.8L1217.0 792.9"/>
<path d="M1217.0 792.9L1240.3 846.5"/>
<path d="M1240.3 846.5L1280.7 872.2"/>
<path d="M1240.3 846.5L1249.5 898.2"/>
<path d="M1249.5 898.2L1282.0 933.6"/>
<path d="M1249.5 898.2L1253.1 949.9"/>
<path d="M1249.8 758.8L1278.1 792.9"/>
<path d="M1249.8 758.8L1269.2 808.0"/>
<path d="M1249.8 758.8L1280.0 770.0"/>
<path d="M569.0 983.4L557.0 994.9"/>
<path d="M557.0 994.9L545.0 1006.2"/>
<path d="M545.0 1006.2L533.0 1017.3"/>
<path d="M533.0 1017.3L520.9 1028.6"/>
<path d="M581.8 990.6L593.1 996.1"/>
<path d="M593.1 996.1L603.4 989.6"/>
<path d="M603.4 989.6L613.5 983.3"/>
<path d="M593.1 996.1L592.6 1008.6"/>
<path d="M639.0 983.3L636.4 994.2"/>
<path d="M626.3 997.1L636.4 994.2"/>
<path d="M636.4 994.2L644.3 1001.4"/>
<path d="M665.5 983.3L657.0 991.8"/>
<path d="M657.0 991.8L665.5 1000.4"/>
<path d="M665.5 1000.4L674.4 991.8"/>
<path d="M674.4 991.8L665.5 983.3"/>
<path d="M686.9 983.3L698.9 985.8"/>
<path d="M698.9 985.8L710.9 988.2"/>
<path d="M710.9 988.2L723.0 990.6"/>
<path d="M735.7 983.3L746.0 995.4"/>
<path d="M746.0 995.4L755.7 1007.4"/>
<path d="M755.7 1007.4L765.3 1019.4"/>
<path d="M783.8 982.9L777.8 992.0"/>
<path d="M777.8 992.0L789.1 993.0"/>
<path d="M789.1 993.0L783.8 982.9"/>
<path d="M801.4 983.3L813.4 986.0"/>
<path d="M813.4 986.0L825.4 988.4"/>
<path d="M838.4 983.3L848.8 995.4"/>
<path d="M848.8 995.4L859.6 1007.4"/>
<path d="M872.3 983.3L883.2 995.4"/>
<path d="M883.2 995.4L894.0 1007.4"/>
<path d="M906.0 988.2L918.5 985.8"/>
<path d="M918.5 985.8L930.8 983.3"/>
<path d="M943.8 983.3L955.8 985.8"/>
<path d="M955.8 985.8L967.8 988.2"/>
<path d="M980.6 983.3L992.6 985.8"/>
<path d="M992.6 985.8L1004.6 988.2"/>
<path d="M1017.1 983.3L1029.1 983.3"/>
<path d="M1041.9 983.3L1053.9 983.3"/>
<path d="M1066.7 983.3L1078.7 983.3"/>
<path d="M1091.2 983.3L1103.7 983.3"/>
<path d="M1116.5 983.3L1128.5 983.3"/>
<path d="M1141.0 983.3L1153.0 983.3"/>
<path d="M1165.8 983.3L1177.8 983.3"/>
<path d="M1191.0 983.3L1203.0 983.3"/>
<path d="M1215.6 983.3L1227.6 983.3"/>
<path d="M921.0 384.5L903.5 435.0"/>
<path d="M903.5 435.0L903.5 488.8"/>
<path d="M903.5 488.8L913.4 539.8"/>
<path d="M978.0 382.5L1020.5 427.0"/>
<path d="M1265.2 382.5L1261.5 438.8"/>
<path d="M1281.0 390.0L1261.5 438.8"/>
<path d="M1288.5 415.0L1261.5 438.8"/>
</g>
<g stroke-width="0.6">
<circle cx="556.0" cy="148.8" r="2.73" fill="#fbfbcc" stroke="#f0f0c4"/>
<rect x="554.5" y="148.3" width="3.0" height="0.8" fill="#666" opacity="0.45"/>
<circle cx="643.0" cy="153.8" r="2.34" fill="#fefefc" stroke="#ececea"/>
<rect x="641.7" y="153.3" width="2.6" height="0.8" fill="#666" opacity="0.45"/>
<circle cx="588.0" cy="178.8" r="2.73" fill="#fbfbcc" stroke="#f0f0c4"/>
<rect x="586.5" y="178.3" width="3.0" height="0.8" fill="#666" opacity="0.45"/>
<circle cx="630.5" cy="199.5" r="3.12" fill="#fbfbcc" stroke="#f0f0c4"/>
<rect x="628.8" y="199.1" width="3.4" height="0.8" fill="#666" opacity="0.45"/>
<circle cx="653.0" cy="241.0" r="2.73" fill="#fbfbcc" stroke="#f0f0c4"/>
<rect x="651.5" y="240.6" width="3.0" height="0.8" fill="#666" opacity="0.45"/>
<circle cx="668.5" cy="285.0" r="2.73" fill="#fdfde8" stroke="#efefdc"/>
<rect x="667.0" y="284.6" width="3.0" height="0.8" fill="#666" opacity="0.45"/>
<circle cx="668.0" cy="333.8" r="3.12" fill="#e0ebf8" stroke="#d6e3f3"/>
<rect x="666.3" y="333.4" width="3.4" height="0.8" fill="#666" opacity="0.45"/>
<circle cx="524.0" cy="307.5" r="2.73" fill="#bcd4f1" stroke="#b3cdee"/>
<rect x="522.5" y="307.1" width="3.0" height="0.8" fill="#666" opacity="0.45"/>
<circle cx="569.8" cy="318.0" r="2.34" fill="#fdfde8" stroke="#efefdc"/>
<rect x="568.5" y="317.6" width="2.6" height="0.8" fill="#666" opacity="0.45"/>
<circle cx="617.8" cy="328.0" r="2.73" fill="#fbfbcc" stroke="#f0f0c4"/>
<rect x="616.2" y="327.6" width="3.0" height="0.8" fill="#666" opacity="0.45"/>
<circle cx="697.8" cy="373.0" r="2.34" fill="#fdfde8" stroke="#efefdc"/>
<rect x="696.5" y="372.6" width="2.6" height="0.8" fill="#666" opacity="0.45"/>
<circle cx="715.5" cy="419.0" r="2.73" fill="#fbfbcc" stroke="#f0f0c4"/>
<rect x="714.0" y="418.6" width="3.0" height="0.8" fill="#666" opacity="0.45"/>
<circle cx="884.8" cy="349.5" r="2.34" fill="#bcd4f1" stroke="#b3cdee"/>
<rect x="883.5" y="349.1" width="2.6" height="0.8" fill="#666" opacity="0.45"/>
<circle cx="904.8" cy="338.8" r="2.34" fill="#93b7e6" stroke="#8aafe0"/>
<rect x="903.5" y="338.4" width="2.6" height="0.8" fill="#666" opacity="0.45"/>
<circle cx="928.5" cy="335.5" r="2.34" fill="#fbfbcc" stroke="#f0f0c4"/>
<rect x="927.2" y="335.1" width="2.6" height="0.8" fill="#666" opacity="0.45"/>
<circle cx="989.8" cy="330.0" r="2.34" fill="#fdfde8" stroke="#efefdc"/>
<rect x="988.5" y="329.6" width="2.6" height="0.8" fill="#666" opacity="0.45"/>
<circle cx="921.0" cy="384.5" r="3.51" fill="#fbfbcc" stroke="#f0f0c4"/>
<rect x="919.1" y="384.1" width="3.9" height="0.8" fill="#666" opacity="0.45"/>
<circle cx="978.0" cy="382.5" r="2.73" fill="#fbfbcc" stroke="#f0f0c4"/>
<rect x="976.5" y="382.1" width="3.0" height="0.8" fill="#666" opacity="0.45"/>
<circle cx="1062.0" cy="358.0" r="1.95" fill="#fefefc" stroke="#ececea"/>
<rect x="1060.9" y="357.6" width="2.1" height="0.8" fill="#666" opacity="0.45"/>
<circle cx="1087.8" cy="364.5" r="1.95" fill="#fefefc" stroke="#ececea"/>
<rect x="1086.7" y="364.1" width="2.1" height="0.8" fill="#666" opacity="0.45"/>
<circle cx="1064.8" cy="410.0" r="2.73" fill="#fbfbcc" stroke="#f0f0c4"/>
<rect x="1063.2" y="409.6" width="3.0" height="0.8" fill="#666" opacity="0.45"/>
<circle cx="954.0" cy="410.5" r="1.95" fill="#fefefc" stroke="#ececea"/>
<rect x="952.9" y="410.1" width="2.1" height="0.8" fill="#666" opacity="0.45"/>
<circle cx="975.2" cy="411.2" r="2.34" fill="#fbfbcc" stroke="#f0f0c4"/>
<rect x="974.0" y="410.9" width="2.6" height="0.8" fill="#666" opacity="0.45"/>
<circle cx="1165.2" cy="347.0" r="2.34" fill="#fbfbcc" stroke="#f0f0c4"/>
<rect x="1164.0" y="346.6" width="2.6" height="0.8" fill="#666" opacity="0.45"/>
<circle cx="1154.8" cy="396.2" r="2.34" fill="#fbfbcc" stroke="#f0f0c4"/>
<rect x="1153.5" y="395.9" width="2.6" height="0.8" fill="#666" opacity="0.45"/>
<circle cx="1156.8" cy="415.0" r="2.34" fill="#fbfbcc" stroke="#f0f0c4"/>
<rect x="1155.5" y="414.6" width="2.6" height="0.8" fill="#666" opacity="0.45"/>
<circle cx="1291.0" cy="343.0" r="2.73" fill="#fbfbcc" stroke="#f0f0c4"/>
<rect x="1289.5" y="342.6" width="3.0" height="0.8" fill="#666" opacity="0.45"/>
<circle cx="1265.2" cy="382.5" r="2.34" fill="#fdfde8" stroke="#efefdc"/>
<rect x="1264.0" y="382.1" width="2.6" height="0.8" fill="#666" opacity="0.45"/>
<circle cx="1281.0" cy="390.0" r="2.34" fill="#fbfbcc" stroke="#f0f0c4"/>
<rect x="1279.7" y="389.6" width="2.6" height="0.8" fill="#666" opacity="0.45"/>
<circle cx="1288.5" cy="415.0" r="2.73" fill="#93b7e6" stroke="#8aafe0"/>
<rect x="1287.0" y="414.6" width="3.0" height="0.8" fill="#666" opacity="0.45"/>
<circle cx="1575.5" cy="172.5" r="2.34" fill="#fdf53a" stroke="#f0e838"/>
<rect x="1574.2" y="172.1" width="2.6" height="0.8" fill="#666" opacity="0.45"/>
<circle cx="1588.5" cy="168.0" r="2.34" fill="#fdfde8" stroke="#efefdc"/>
<rect x="1587.2" y="167.6" width="2.6" height="0.8" fill="#666" opacity="0.45"/>
<circle cx="1595.5" cy="157.0" r="3.12" fill="#fbfbcc" stroke="#f0f0c4"/>
<rect x="1593.8" y="156.6" width="3.4" height="0.8" fill="#666" opacity="0.45"/>
<circle cx="1602.0" cy="148.5" r="2.34" fill="#fbfbcc" stroke="#f0f0c4"/>
<rect x="1600.7" y="148.1" width="2.6" height="0.8" fill="#666" opacity="0.45"/>
<circle cx="1611.5" cy="157.5" r="2.34" fill="#fbfbcc" stroke="#f0f0c4"/>
<rect x="1610.2" y="157.1" width="2.6" height="0.8" fill="#666" opacity="0.45"/>
<circle cx="1602.0" cy="165.5" r="3.51" fill="#fbfbcc" stroke="#f0f0c4"/>
<rect x="1600.1" y="165.1" width="3.9" height="0.8" fill="#666" opacity="0.45"/>
<circle cx="1610.0" cy="177.5" r="2.34" fill="#fbfbcc" stroke="#f0f0c4"/>
<rect x="1608.7" y="177.1" width="2.6" height="0.8" fill="#666" opacity="0.45"/>
<circle cx="1624.0" cy="152.5" r="2.73" fill="#bcd4f1" stroke="#b3cdee"/>
<rect x="1622.5" y="152.1" width="3.0" height="0.8" fill="#666" opacity="0.45"/>
<circle cx="1636.0" cy="148.0" r="2.34" fill="#fbfbcc" stroke="#f0f0c4"/>
<rect x="1634.7" y="147.6" width="2.6" height="0.8" fill="#666" opacity="0.45"/>
<circle cx="1641.0" cy="160.0" r="2.34" fill="#fdfde8" stroke="#efefdc"/>
<rect x="1639.7" y="159.6" width="2.6" height="0.8" fill="#666" opacity="0.45"/>
<circle cx="1629.0" cy="164.0" r="2.34" fill="#fdfde8" stroke="#efefdc"/>
<rect x="1627.7" y="163.6" width="2.6" height="0.8" fill="#666" opacity="0.45"/>
<circle cx="1652.0" cy="165.0" r="2.34" fill="#fefefc" stroke="#ececea"/>
<rect x="1650.7" y="164.6" width="2.6" height="0.8" fill="#666" opacity="0.45"/>
<circle cx="1671.5" cy="148.0" r="2.34" fill="#e0ebf8" stroke="#d6e3f3"/>
<rect x="1670.2" y="147.6" width="2.6" height="0.8" fill="#666" opacity="0.45"/>
<circle cx="1673.5" cy="159.5" r="2.34" fill="#fdfde8" stroke="#efefdc"/>
<rect x="1672.2" y="159.1" width="2.6" height="0.8" fill="#666" opacity="0.45"/>
<circle cx="1664.8" cy="166.5" r="2.34" fill="#fbfbcc" stroke="#f0f0c4"/>
<rect x="1663.5" y="166.1" width="2.6" height="0.8" fill="#666" opacity="0.45"/>
<circle cx="1684.2" cy="163.8" r="2.73" fill="#fbfbcc" stroke="#f0f0c4"/>
<rect x="1682.7" y="163.3" width="3.0" height="0.8" fill="#666" opacity="0.45"/>
<circle cx="1694.5" cy="168.0" r="2.34" fill="#e0ebf8" stroke="#d6e3f3"/>
<rect x="1693.2" y="167.6" width="2.6" height="0.8" fill="#666" opacity="0.45"/>
<circle cx="716.0" cy="420.0" r="2.73" fill="#fbfbcc" stroke="#f0f0c4"/>
<rect x="714.5" y="419.6" width="3.0" height="0.8" fill="#666" opacity="0.45"/>
<circle cx="753.5" cy="446.8" r="2.34" fill="#fdfde8" stroke="#efefdc"/>
<rect x="752.2" y="446.4" width="2.6" height="0.8" fill="#666" opacity="0.45"/>
<circle cx="781.0" cy="451.8" r="2.34" fill="#fdfde8" stroke="#efefdc"/>
<rect x="779.7" y="451.4" width="2.6" height="0.8" fill="#666" opacity="0.45"/>
<circle cx="804.8" cy="450.8" r="1.95" fill="#fefefc" stroke="#ececea"/>
<rect x="803.7" y="450.4" width="2.1" height="0.8" fill="#666" opacity="0.45"/>
<circle cx="765.5" cy="465.5" r="1.95" fill="#fbfbcc" stroke="#f0f0c4"/>
<rect x="764.4" y="465.1" width="2.1" height="0.8" fill="#666" opacity="0.45"/>
<circle cx="716.8" cy="473.8" r="2.34" fill="#fdfde8" stroke="#efefdc"/>
<rect x="715.5" y="473.4" width="2.6" height="0.8" fill="#666" opacity="0.45"/>
<circle cx="653.0" cy="438.8" r="2.73" fill="#93b7e6" stroke="#8aafe0"/>
<rect x="651.5" y="438.4" width="3.0" height="0.8" fill="#666" opacity="0.45"/>
<circle cx="627.8" cy="460.5" r="2.73" fill="#e0ebf8" stroke="#d6e3f3"/>
<rect x="626.2" y="460.1" width="3.0" height="0.8" fill="#666" opacity="0.45"/>
<circle cx="580.5" cy="463.8" r="2.34" fill="#fdfde8" stroke="#efefdc"/>
<rect x="579.2" y="463.4" width="2.6" height="0.8" fill="#666" opacity="0.45"/>
<circle cx="534.0" cy="463.5" r="1.95" fill="#fefefc" stroke="#ececea"/>
<rect x="532.9" y="463.1" width="2.1" height="0.8" fill="#666" opacity="0.45"/>
<circle cx="622.2" cy="483.5" r="2.73" fill="#bcd4f1" stroke="#b3cdee"/>
<rect x="620.7" y="483.1" width="3.0" height="0.8" fill="#666" opacity="0.45"/>
<circle cx="665.2" cy="483.8" r="3.12" fill="#fbfbcc" stroke="#f0f0c4"/>
<rect x="663.5" y="483.4" width="3.4" height="0.8" fill="#666" opacity="0.45"/>
<circle cx="738.0" cy="494.0" r="2.34" fill="#fdfde8" stroke="#efefdc"/>
<rect x="736.7" y="493.6" width="2.6" height="0.8" fill="#666" opacity="0.45"/>
<circle cx="769.8" cy="499.0" r="3.51" fill="#fdfde8" stroke="#efefdc"/>
<rect x="767.8" y="498.6" width="3.9" height="0.8" fill="#666" opacity="0.45"/>
<circle cx="805.2" cy="505.8" r="2.34" fill="#fbfbcc" stroke="#f0f0c4"/>
<rect x="804.0" y="505.4" width="2.6" height="0.8" fill="#666" opacity="0.45"/>
<circle cx="617.8" cy="515.8" r="2.34" fill="#e0ebf8" stroke="#d6e3f3"/>
<rect x="616.5" y="515.4" width="2.6" height="0.8" fill="#666" opacity="0.45"/>
<circle cx="567.8" cy="530.5" r="2.34" fill="#fdfde8" stroke="#efefdc"/>
<rect x="566.5" y="530.1" width="2.6" height="0.8" fill="#666" opacity="0.45"/>
<circle cx="520.5" cy="541.0" r="2.34" fill="#fdfde8" stroke="#efefdc"/>
<rect x="519.2" y="540.6" width="2.6" height="0.8" fill="#666" opacity="0.45"/>
<circle cx="734.8" cy="521.0" r="2.34" fill="#fdfde8" stroke="#efefdc"/>
<rect x="733.5" y="520.6" width="2.6" height="0.8" fill="#666" opacity="0.45"/>
<circle cx="783.0" cy="528.8" r="2.34" fill="#fdfde8" stroke="#efefdc"/>
<rect x="781.7" y="528.4" width="2.6" height="0.8" fill="#666" opacity="0.45"/>
<circle cx="799.8" cy="548.8" r="5" fill="#fdfde8" stroke="#efefdc"/>
<circle cx="712.2" cy="553.0" r="2.34" fill="#fbfbcc" stroke="#f0f0c4"/>
<rect x="711.0" y="552.6" width="2.6" height="0.8" fill="#666" opacity="0.45"/>
<circle cx="761.8" cy="553.8" r="2.73" fill="#fbfbcc" stroke="#f0f0c4"/>
<rect x="760.2" y="553.4" width="3.0" height="0.8" fill="#666" opacity="0.45"/>
<circle cx="852.0" cy="564.2" r="1.95" fill="#fefefc" stroke="#ececea"/>
<rect x="850.9" y="563.8" width="2.1" height="0.8" fill="#666" opacity="0.45"/>
<circle cx="664.0" cy="576.2" r="1.95" fill="#fefefc" stroke="#ececea"/>
<rect x="662.9" y="575.9" width="2.1" height="0.8" fill="#666" opacity="0.45"/>
<circle cx="713.0" cy="574.5" r="2.34" fill="#fbfbcc" stroke="#f0f0c4"/>
<rect x="711.7" y="574.1" width="2.6" height="0.8" fill="#666" opacity="0.45"/>
<circle cx="762.8" cy="572.5" r="2.34" fill="#fdfde8" stroke="#efefdc"/>
<rect x="761.5" y="572.1" width="2.6" height="0.8" fill="#666" opacity="0.45"/>
<circle cx="763.5" cy="588.0" r="2.34" fill="#fdfde8" stroke="#efefdc"/>
<rect x="762.2" y="587.6" width="2.6" height="0.8" fill="#666" opacity="0.45"/>
<circle cx="706.0" cy="600.5" r="2.73" fill="#fbfbcc" stroke="#f0f0c4"/>
<rect x="704.5" y="600.1" width="3.0" height="0.8" fill="#666" opacity="0.45"/>
<circle cx="716.0" cy="608.0" r="2.34" fill="#fdfde8" stroke="#efefdc"/>
<rect x="714.7" y="607.6" width="2.6" height="0.8" fill="#666" opacity="0.45"/>
<circle cx="655.5" cy="626.5" r="2.34" fill="#fdfde8" stroke="#efefdc"/>
<rect x="654.2" y="626.1" width="2.6" height="0.8" fill="#666" opacity="0.45"/>
<circle cx="721.0" cy="625.0" r="2.34" fill="#fdfde8" stroke="#efefdc"/>
<rect x="719.7" y="624.6" width="2.6" height="0.8" fill="#666" opacity="0.45"/>
<circle cx="672.8" cy="638.0" r="2.34" fill="#fdfde8" stroke="#efefdc"/>
<rect x="671.5" y="637.6" width="2.6" height="0.8" fill="#666" opacity="0.45"/>
<circle cx="610.5" cy="648.8" r="1.95" fill="#fefefc" stroke="#ececea"/>
<rect x="609.4" y="648.4" width="2.1" height="0.8" fill="#666" opacity="0.45"/>
<circle cx="786.8" cy="624.2" r="1.95" fill="#fefefc" stroke="#ececea"/>
<rect x="785.7" y="623.9" width="2.1" height="0.8" fill="#666" opacity="0.45"/>
<circle cx="913.1" cy="588.0" r="8.6" fill="#fefefa" stroke="#eeeee6"/>
<circle cx="871.2" cy="515.7" r="2.34" fill="#fdfde8" stroke="#efefdc"/>
<rect x="869.9" y="515.3" width="2.6" height="0.8" fill="#666" opacity="0.45"/>
<circle cx="887.5" cy="510.4" r="1.95" fill="#e0ebf8" stroke="#d6e3f3"/>
<rect x="886.4" y="510.0" width="2.1" height="0.8" fill="#666" opacity="0.45"/>
<circle cx="913.4" cy="539.8" r="2.73" fill="#fefefc" stroke="#ececea"/>
<rect x="911.9" y="539.4" width="3.0" height="0.8" fill="#666" opacity="0.45"/>
<circle cx="891.2" cy="553.2" r="2.73" fill="#fdfde8" stroke="#efefdc"/>
<rect x="889.7" y="552.8" width="3.0" height="0.8" fill="#666" opacity="0.45"/>
<circle cx="906.9" cy="554.1" r="2.73" fill="#e0ebf8" stroke="#d6e3f3"/>
<rect x="905.4" y="553.7" width="3.0" height="0.8" fill="#666" opacity="0.45"/>
<circle cx="944.4" cy="552.8" r="2.73" fill="#fbfbcc" stroke="#f0f0c4"/>
<rect x="942.9" y="552.4" width="3.0" height="0.8" fill="#666" opacity="0.45"/>
<circle cx="979.5" cy="513.9" r="2.73" fill="#fefefc" stroke="#ececea"/>
<rect x="978.0" y="513.5" width="3.0" height="0.8" fill="#666" opacity="0.45"/>
<circle cx="955.4" cy="516.1" r="2.34" fill="#fdfde8" stroke="#efefdc"/>
<rect x="954.1" y="515.7" width="2.6" height="0.8" fill="#666" opacity="0.45"/>
<circle cx="964.0" cy="561.6" r="2.73" fill="#fefefc" stroke="#ececea"/>
<rect x="962.5" y="561.2" width="3.0" height="0.8" fill="#666" opacity="0.45"/>
<circle cx="948.5" cy="577.1" r="2.34" fill="#fdfde8" stroke="#efefdc"/>
<rect x="947.2" y="576.7" width="2.6" height="0.8" fill="#666" opacity="0.45"/>
<circle cx="915.8" cy="568.5" r="2.73" fill="#bcd4f1" stroke="#b3cdee"/>
<rect x="914.3" y="568.1" width="3.0" height="0.8" fill="#666" opacity="0.45"/>
<circle cx="899.2" cy="573.6" r="2.73" fill="#bcd4f1" stroke="#b3cdee"/>
<rect x="897.7" y="573.2" width="3.0" height="0.8" fill="#666" opacity="0.45"/>
<circle cx="878.4" cy="580.3" r="3.51" fill="#fbfbcc" stroke="#f0f0c4"/>
<rect x="876.5" y="579.9" width="3.9" height="0.8" fill="#666" opacity="0.45"/>
<circle cx="851.9" cy="564.2" r="2.34" fill="#fefefc" stroke="#ececea"/>
<rect x="850.6" y="563.8" width="2.6" height="0.8" fill="#666" opacity="0.45"/>
<circle cx="832.8" cy="591.5" r="2.34" fill="#fdfde8" stroke="#efefdc"/>
<rect x="831.5" y="591.1" width="2.6" height="0.8" fill="#666" opacity="0.45"/>
<circle cx="875.9" cy="592.9" r="2.34" fill="#fdfde8" stroke="#efefdc"/>
<rect x="874.6" y="592.5" width="2.6" height="0.8" fill="#666" opacity="0.45"/>
<circle cx="832.8" cy="603.6" r="2.34" fill="#fbfbcc" stroke="#f0f0c4"/>
<rect x="831.5" y="603.2" width="2.6" height="0.8" fill="#666" opacity="0.45"/>
<circle cx="895.7" cy="598.7" r="2.73" fill="#bcd4f1" stroke="#b3cdee"/>
<rect x="894.2" y="598.3" width="3.0" height="0.8" fill="#666" opacity="0.45"/>
<circle cx="878.6" cy="607.3" r="2.34" fill="#e0ebf8" stroke="#d6e3f3"/>
<rect x="877.3" y="606.9" width="2.6" height="0.8" fill="#666" opacity="0.45"/>
<circle cx="904.8" cy="607.1" r="2.73" fill="#bcd4f1" stroke="#b3cdee"/>
<rect x="903.3" y="606.7" width="3.0" height="0.8" fill="#666" opacity="0.45"/>
<circle cx="834.2" cy="620.1" r="2.34" fill="#bcd4f1" stroke="#b3cdee"/>
<rect x="832.9" y="619.7" width="2.6" height="0.8" fill="#666" opacity="0.45"/>
<circle cx="939.9" cy="592.1" r="2.34" fill="#e0ebf8" stroke="#d6e3f3"/>
<rect x="938.6" y="591.7" width="2.6" height="0.8" fill="#666" opacity="0.45"/>
<circle cx="929.0" cy="598.5" r="2.73" fill="#fdfde8" stroke="#efefdc"/>
<rect x="927.5" y="598.1" width="3.0" height="0.8" fill="#666" opacity="0.45"/>
<circle cx="895.7" cy="628.5" r="2.34" fill="#fdf53a" stroke="#f0e838"/>
<rect x="894.4" y="628.1" width="2.6" height="0.8" fill="#666" opacity="0.45"/>
<circle cx="934.8" cy="640.5" r="1.95" fill="#fefefc" stroke="#ececea"/>
<rect x="933.7" y="640.1" width="2.1" height="0.8" fill="#666" opacity="0.45"/>
<circle cx="1020.5" cy="427.0" r="2.34" fill="#fdfde8" stroke="#efefdc"/>
<rect x="1019.2" y="426.6" width="2.6" height="0.8" fill="#666" opacity="0.45"/>
<circle cx="1059.2" cy="440.5" r="1.95" fill="#fefefc" stroke="#ececea"/>
<rect x="1058.2" y="440.1" width="2.1" height="0.8" fill="#666" opacity="0.45"/>
<circle cx="1081.5" cy="430.0" r="2.34" fill="#fdfde8" stroke="#efefdc"/>
<rect x="1080.2" y="429.6" width="2.6" height="0.8" fill="#666" opacity="0.45"/>
<circle cx="1061.8" cy="466.2" r="2.73" fill="#fdfde8" stroke="#efefdc"/>
<rect x="1060.2" y="465.9" width="3.0" height="0.8" fill="#666" opacity="0.45"/>
<circle cx="1064.0" cy="490.0" r="1.95" fill="#fefefc" stroke="#ececea"/>
<rect x="1062.9" y="489.6" width="2.1" height="0.8" fill="#666" opacity="0.45"/>
<circle cx="1050.2" cy="493.8" r="2.34" fill="#fdfde8" stroke="#efefdc"/>
<rect x="1049.0" y="493.4" width="2.6" height="0.8" fill="#666" opacity="0.45"/>
<circle cx="1115.0" cy="458.2" r="2.34" fill="#fdfde8" stroke="#efefdc"/>
<rect x="1113.7" y="457.9" width="2.6" height="0.8" fill="#666" opacity="0.45"/>
<circle cx="1083.0" cy="497.5" r="2.34" fill="#fdfde8" stroke="#efefdc"/>
<rect x="1081.7" y="497.1" width="2.6" height="0.8" fill="#666" opacity="0.45"/>
<circle cx="1113.5" cy="493.2" r="2.73" fill="#fbfbcc" stroke="#f0f0c4"/>
<rect x="1112.0" y="492.9" width="3.0" height="0.8" fill="#666" opacity="0.45"/>
<circle cx="1138.5" cy="501.5" r="1.95" fill="#e0ebf8" stroke="#d6e3f3"/>
<rect x="1137.4" y="501.1" width="2.1" height="0.8" fill="#666" opacity="0.45"/>
<circle cx="1061.8" cy="523.8" r="5" fill="#fdfde8" stroke="#efefdc"/>
<circle cx="1097.8" cy="521.2" r="1.95" fill="#fdfde8" stroke="#efefdc"/>
<rect x="1096.7" y="520.9" width="2.1" height="0.8" fill="#666" opacity="0.45"/>
<circle cx="1086.8" cy="533.2" r="1.95" fill="#fdfde8" stroke="#efefdc"/>
<rect x="1085.7" y="532.9" width="2.1" height="0.8" fill="#666" opacity="0.45"/>
<circle cx="1028.0" cy="510.8" r="1.95" fill="#fefefc" stroke="#ececea"/>
<rect x="1026.9" y="510.4" width="2.1" height="0.8" fill="#666" opacity="0.45"/>
<circle cx="939.8" cy="465.0" r="1.95" fill="#e0ebf8" stroke="#d6e3f3"/>
<rect x="938.7" y="464.6" width="2.1" height="0.8" fill="#666" opacity="0.45"/>
<circle cx="963.5" cy="464.5" r="1.95" fill="#fdfde8" stroke="#efefdc"/>
<rect x="962.4" y="464.1" width="2.1" height="0.8" fill="#666" opacity="0.45"/>
<circle cx="980.5" cy="466.8" r="1.95" fill="#fefefc" stroke="#ececea"/>
<rect x="979.4" y="466.4" width="2.1" height="0.8" fill="#666" opacity="0.45"/>
<circle cx="1013.0" cy="543.8" r="1.95" fill="#fefefc" stroke="#ececea"/>
<rect x="1011.9" y="543.4" width="2.1" height="0.8" fill="#666" opacity="0.45"/>
<circle cx="1157.2" cy="458.0" r="2.73" fill="#fbfbcc" stroke="#f0f0c4"/>
<rect x="1155.7" y="457.6" width="3.0" height="0.8" fill="#666" opacity="0.45"/>
<circle cx="1176.0" cy="422.5" r="2.34" fill="#fdfde8" stroke="#efefdc"/>
<rect x="1174.7" y="422.1" width="2.6" height="0.8" fill="#666" opacity="0.45"/>
<circle cx="1186.0" cy="448.2" r="1.95" fill="#fdfde8" stroke="#efefdc"/>
<rect x="1184.9" y="447.9" width="2.1" height="0.8" fill="#666" opacity="0.45"/>
<circle cx="1214.0" cy="458.0" r="1.95" fill="#fefefc" stroke="#ececea"/>
<rect x="1212.9" y="457.6" width="2.1" height="0.8" fill="#666" opacity="0.45"/>
<circle cx="1261.5" cy="438.8" r="2.73" fill="#fbfbcc" stroke="#f0f0c4"/>
<rect x="1260.0" y="438.4" width="3.0" height="0.8" fill="#666" opacity="0.45"/>
<circle cx="1058.8" cy="568.8" r="2.34" fill="#fdfde8" stroke="#efefdc"/>
<rect x="1057.5" y="568.4" width="2.6" height="0.8" fill="#666" opacity="0.45"/>
<circle cx="1094.8" cy="569.2" r="2.34" fill="#fdfde8" stroke="#efefdc"/>
<rect x="1093.5" y="568.9" width="2.6" height="0.8" fill="#666" opacity="0.45"/>
<circle cx="1119.0" cy="615.0" r="2.34" fill="#fdfde8" stroke="#efefdc"/>
<rect x="1117.7" y="614.6" width="2.6" height="0.8" fill="#666" opacity="0.45"/>
<circle cx="1045.2" cy="627.5" r="2.34" fill="#fdfde8" stroke="#efefdc"/>
<rect x="1044.0" y="627.1" width="2.6" height="0.8" fill="#666" opacity="0.45"/>
<circle cx="934.8" cy="640.5" r="1.95" fill="#fefefc" stroke="#ececea"/>
<rect x="933.7" y="640.1" width="2.1" height="0.8" fill="#666" opacity="0.45"/>
<circle cx="1054.5" cy="662.0" r="2.34" fill="#bcd4f1" stroke="#b3cdee"/>
<rect x="1053.2" y="661.6" width="2.6" height="0.8" fill="#666" opacity="0.45"/>
<circle cx="1020.5" cy="676.2" r="1.95" fill="#fefefc" stroke="#ececea"/>
<rect x="1019.4" y="675.9" width="2.1" height="0.8" fill="#666" opacity="0.45"/>
<circle cx="1132.2" cy="669.5" r="2.73" fill="#fdfde8" stroke="#efefdc"/>
<rect x="1130.7" y="669.1" width="3.0" height="0.8" fill="#666" opacity="0.45"/>
<circle cx="1162.2" cy="663.0" r="2.34" fill="#fdf53a" stroke="#f0e838"/>
<rect x="1161.0" y="662.6" width="2.6" height="0.8" fill="#666" opacity="0.45"/>
<circle cx="1175.5" cy="650.5" r="2.34" fill="#fdfde8" stroke="#efefdc"/>
<rect x="1174.2" y="650.1" width="2.6" height="0.8" fill="#666" opacity="0.45"/>
<circle cx="1221.8" cy="640.0" r="2.34" fill="#fdfde8" stroke="#efefdc"/>
<rect x="1220.5" y="639.6" width="2.6" height="0.8" fill="#666" opacity="0.45"/>
<circle cx="1268.0" cy="633.8" r="2.34" fill="#fdfde8" stroke="#efefdc"/>
<rect x="1266.7" y="633.4" width="2.6" height="0.8" fill="#666" opacity="0.45"/>
<circle cx="1180.5" cy="698.0" r="2.73" fill="#fbfbcc" stroke="#f0f0c4"/>
<rect x="1179.0" y="697.6" width="3.0" height="0.8" fill="#666" opacity="0.45"/>
<circle cx="1223.0" cy="684.2" r="2.34" fill="#fdfde8" stroke="#efefdc"/>
<rect x="1221.7" y="683.9" width="2.6" height="0.8" fill="#666" opacity="0.45"/>
<circle cx="1216.8" cy="737.5" r="1.95" fill="#fefefc" stroke="#ececea"/>
<rect x="1215.7" y="737.1" width="2.1" height="0.8" fill="#666" opacity="0.45"/>
<circle cx="1249.8" cy="758.8" r="2.73" fill="#fbfbcc" stroke="#f0f0c4"/>
<rect x="1248.2" y="758.4" width="3.0" height="0.8" fill="#666" opacity="0.45"/>
<circle cx="1301.8" cy="733.8" r="2.34" fill="#fdfde8" stroke="#efefdc"/>
<rect x="1300.5" y="733.4" width="2.6" height="0.8" fill="#666" opacity="0.45"/>
<circle cx="1194.0" cy="768.8" r="2.34" fill="#fdfde8" stroke="#efefdc"/>
<rect x="1192.7" y="768.4" width="2.6" height="0.8" fill="#666" opacity="0.45"/>
<circle cx="1388.0" cy="438.8" r="2.34" fill="#fdfde8" stroke="#efefdc"/>
<rect x="1386.7" y="438.4" width="2.6" height="0.8" fill="#666" opacity="0.45"/>
<circle cx="1309.8" cy="463.8" r="2.34" fill="#fdfde8" stroke="#efefdc"/>
<rect x="1308.5" y="463.4" width="2.6" height="0.8" fill="#666" opacity="0.45"/>
<circle cx="1357.2" cy="482.5" r="2.73" fill="#e0ebf8" stroke="#d6e3f3"/>
<rect x="1355.7" y="482.1" width="3.0" height="0.8" fill="#666" opacity="0.45"/>
<circle cx="1425.5" cy="488.0" r="2.34" fill="#fdfde8" stroke="#efefdc"/>
<rect x="1424.2" y="487.6" width="2.6" height="0.8" fill="#666" opacity="0.45"/>
<circle cx="1434.0" cy="504.5" r="2.34" fill="#fbfbcc" stroke="#f0f0c4"/>
<rect x="1432.7" y="504.1" width="2.6" height="0.8" fill="#666" opacity="0.45"/>
<circle cx="1392.2" cy="525.0" r="2.34" fill="#fefefc" stroke="#ececea"/>
<rect x="1391.0" y="524.6" width="2.6" height="0.8" fill="#666" opacity="0.45"/>
<circle cx="1404.0" cy="579.5" r="2.73" fill="#fbfbcc" stroke="#f0f0c4"/>
<rect x="1402.5" y="579.1" width="3.0" height="0.8" fill="#666" opacity="0.45"/>
<circle cx="1495.5" cy="571.2" r="2.34" fill="#fdfde8" stroke="#efefdc"/>
<rect x="1494.2" y="570.9" width="2.6" height="0.8" fill="#666" opacity="0.45"/>
<circle cx="1446.5" cy="598.8" r="2.73" fill="#fbfbcc" stroke="#f0f0c4"/>
<rect x="1445.0" y="598.4" width="3.0" height="0.8" fill="#666" opacity="0.45"/>
<circle cx="1504.0" cy="598.8" r="2.73" fill="#fbfbcc" stroke="#f0f0c4"/>
<rect x="1502.5" y="598.4" width="3.0" height="0.8" fill="#666" opacity="0.45"/>
<circle cx="1466.0" cy="620.8" r="2.73" fill="#e0ebf8" stroke="#d6e3f3"/>
<rect x="1464.5" y="620.4" width="3.0" height="0.8" fill="#666" opacity="0.45"/>
<circle cx="1512.8" cy="623.0" r="2.73" fill="#fbfbcc" stroke="#f0f0c4"/>
<rect x="1511.2" y="622.6" width="3.0" height="0.8" fill="#666" opacity="0.45"/>
<circle cx="1420.5" cy="633.2" r="3.51" fill="#fdfde8" stroke="#efefdc"/>
<rect x="1418.6" y="632.9" width="3.9" height="0.8" fill="#666" opacity="0.45"/>
<circle cx="1467.8" cy="634.5" r="3.12" fill="#e0ebf8" stroke="#d6e3f3"/>
<rect x="1466.0" y="634.1" width="3.4" height="0.8" fill="#666" opacity="0.45"/>
<circle cx="1508.0" cy="650.5" r="2.34" fill="#fdfde8" stroke="#efefdc"/>
<rect x="1506.7" y="650.1" width="2.6" height="0.8" fill="#666" opacity="0.45"/>
<circle cx="1437.2" cy="657.0" r="2.34" fill="#fbfbcc" stroke="#f0f0c4"/>
<rect x="1436.0" y="656.6" width="2.6" height="0.8" fill="#666" opacity="0.45"/>
<circle cx="1464.0" cy="673.0" r="2.34" fill="#fbfbcc" stroke="#f0f0c4"/>
<rect x="1462.7" y="672.6" width="2.6" height="0.8" fill="#666" opacity="0.45"/>
<circle cx="1514.0" cy="694.2" r="2.73" fill="#fbfbcc" stroke="#f0f0c4"/>
<rect x="1512.5" y="693.9" width="3.0" height="0.8" fill="#666" opacity="0.45"/>
<circle cx="1563.0" cy="683.2" r="2.34" fill="#bcd4f1" stroke="#b3cdee"/>
<rect x="1561.7" y="682.9" width="2.6" height="0.8" fill="#666" opacity="0.45"/>
<circle cx="1549.8" cy="725.5" r="2.34" fill="#e0ebf8" stroke="#d6e3f3"/>
<rect x="1548.5" y="725.1" width="2.6" height="0.8" fill="#666" opacity="0.45"/>
<circle cx="1389.0" cy="678.8" r="2.73" fill="#fbfbcc" stroke="#f0f0c4"/>
<rect x="1387.5" y="678.4" width="3.0" height="0.8" fill="#666" opacity="0.45"/>
<circle cx="1347.8" cy="710.0" r="2.73" fill="#fbfbcc" stroke="#f0f0c4"/>
<rect x="1346.2" y="709.6" width="3.0" height="0.8" fill="#666" opacity="0.45"/>
<circle cx="1423.0" cy="721.8" r="2.34" fill="#fdfde8" stroke="#efefdc"/>
<rect x="1421.7" y="721.4" width="2.6" height="0.8" fill="#666" opacity="0.45"/>
<circle cx="1378.0" cy="750.0" r="2.34" fill="#fbfbcc" stroke="#f0f0c4"/>
<rect x="1376.7" y="749.6" width="2.6" height="0.8" fill="#666" opacity="0.45"/>
<circle cx="1459.2" cy="761.2" r="2.73" fill="#bcd4f1" stroke="#b3cdee"/>
<rect x="1457.7" y="760.9" width="3.0" height="0.8" fill="#666" opacity="0.45"/>
<circle cx="1419.0" cy="400.5" r="2.73" fill="#e0ebf8" stroke="#d6e3f3"/>
<rect x="1417.5" y="400.1" width="3.0" height="0.8" fill="#666" opacity="0.45"/>
<circle cx="1332.5" cy="774.3" r="2.34" fill="#fdfde8" stroke="#efefdc"/>
<rect x="1331.2" y="773.9" width="2.6" height="0.8" fill="#666" opacity="0.45"/>
<circle cx="1313.2" cy="911.9" r="2.73" fill="#fbfbcc" stroke="#f0f0c4"/>
<rect x="1311.7" y="911.5" width="3.0" height="0.8" fill="#666" opacity="0.45"/>
<circle cx="1332.5" cy="957.6" r="2.34" fill="#fbfbcc" stroke="#f0f0c4"/>
<rect x="1331.2" y="957.2" width="2.6" height="0.8" fill="#666" opacity="0.45"/>
<circle cx="887.4" cy="675.5" r="2.73" fill="#fdfde8" stroke="#efefdc"/>
<rect x="885.9" y="675.1" width="3.0" height="0.8" fill="#666" opacity="0.45"/>
<circle cx="837.2" cy="685.3" r="2.34" fill="#fdf53a" stroke="#f0e838"/>
<rect x="835.9" y="684.9" width="2.6" height="0.8" fill="#666" opacity="0.45"/>
<circle cx="928.6" cy="685.3" r="2.34" fill="#fdf53a" stroke="#f0e838"/>
<rect x="927.3" y="684.9" width="2.6" height="0.8" fill="#666" opacity="0.45"/>
<circle cx="946.3" cy="693.5" r="6.3" fill="#fbfbcc" stroke="#f0f0c4"/>
<circle cx="963.2" cy="691.3" r="2.34" fill="#fefefc" stroke="#ececea"/>
<rect x="961.9" y="690.9" width="2.6" height="0.8" fill="#666" opacity="0.45"/>
<circle cx="923.4" cy="707.9" r="2.73" fill="#0a5ccb" stroke="#0a55c0"/>
<circle cx="893.7" cy="713.0" r="2.73" fill="#fdfde8" stroke="#efefdc"/>
<rect x="892.2" y="712.6" width="3.0" height="0.8" fill="#666" opacity="0.45"/>
<circle cx="933.7" cy="714.5" r="2.34" fill="#fdfde8" stroke="#efefdc"/>
<rect x="932.4" y="714.1" width="2.6" height="0.8" fill="#666" opacity="0.45"/>
<circle cx="961.0" cy="716.3" r="2.34" fill="#e0ebf8" stroke="#d6e3f3"/>
<rect x="959.7" y="715.9" width="2.6" height="0.8" fill="#666" opacity="0.45"/>
<circle cx="843.2" cy="725.3" r="2.34" fill="#fdfde8" stroke="#efefdc"/>
<rect x="841.9" y="724.9" width="2.6" height="0.8" fill="#666" opacity="0.45"/>
<circle cx="863.2" cy="723.2" r="2.34" fill="#fdfde8" stroke="#efefdc"/>
<rect x="861.9" y="722.8" width="2.6" height="0.8" fill="#666" opacity="0.45"/>
<circle cx="906.0" cy="727.4" r="6.3" fill="#fdfde8" stroke="#efefdc"/>
<circle cx="872.3" cy="736.8" r="2.34" fill="#fbfbcc" stroke="#f0f0c4"/>
<rect x="871.0" y="736.4" width="2.6" height="0.8" fill="#666" opacity="0.45"/>
<circle cx="846.6" cy="738.4" r="2.34" fill="#fdfde8" stroke="#efefdc"/>
<rect x="845.3" y="738.0" width="2.6" height="0.8" fill="#666" opacity="0.45"/>
<circle cx="921.9" cy="735.0" r="2.34" fill="#fdfde8" stroke="#efefdc"/>
<rect x="920.6" y="734.6" width="2.6" height="0.8" fill="#666" opacity="0.45"/>
<circle cx="888.7" cy="742.8" r="3.12" fill="#fbfbcc" stroke="#f0f0c4"/>
<rect x="887.0" y="742.4" width="3.4" height="0.8" fill="#666" opacity="0.45"/>
<circle cx="927.2" cy="750.7" r="3.12" fill="#fdfde8" stroke="#efefdc"/>
<rect x="925.5" y="750.3" width="3.4" height="0.8" fill="#666" opacity="0.45"/>
<circle cx="854.4" cy="758.7" r="3.12" fill="#fbfbcc" stroke="#f0f0c4"/>
<rect x="852.7" y="758.3" width="3.4" height="0.8" fill="#666" opacity="0.45"/>
<circle cx="886.0" cy="770.0" r="2.34" fill="#fdfde8" stroke="#efefdc"/>
<rect x="884.7" y="769.6" width="2.6" height="0.8" fill="#666" opacity="0.45"/>
<circle cx="904.5" cy="777.0" r="2.34" fill="#fdfde8" stroke="#efefdc"/>
<rect x="903.2" y="776.6" width="2.6" height="0.8" fill="#666" opacity="0.45"/>
<circle cx="952.8" cy="767.1" r="2.34" fill="#fdfde8" stroke="#efefdc"/>
<rect x="951.5" y="766.7" width="2.6" height="0.8" fill="#666" opacity="0.45"/>
<circle cx="804.8" cy="788.0" r="2.73" fill="#fdfde8" stroke="#efefdc"/>
<rect x="803.2" y="787.6" width="3.0" height="0.8" fill="#666" opacity="0.45"/>
<circle cx="756.6" cy="792.1" r="2.73" fill="#93b7e6" stroke="#8aafe0"/>
<rect x="755.1" y="791.7" width="3.0" height="0.8" fill="#666" opacity="0.45"/>
<circle cx="764.6" cy="823.4" r="2.73" fill="#fdf53a" stroke="#f0e838"/>
<rect x="763.1" y="823.0" width="3.0" height="0.8" fill="#666" opacity="0.45"/>
<circle cx="787.9" cy="836.1" r="2.34" fill="#e0ebf8" stroke="#d6e3f3"/>
<rect x="786.6" y="835.7" width="2.6" height="0.8" fill="#666" opacity="0.45"/>
<circle cx="732.8" cy="863.8" r="2.34" fill="#fdfde8" stroke="#efefdc"/>
<rect x="731.5" y="863.4" width="2.6" height="0.8" fill="#666" opacity="0.45"/>
<circle cx="869.2" cy="784.0" r="2.73" fill="#fbfbcc" stroke="#f0f0c4"/>
<rect x="867.7" y="783.6" width="3.0" height="0.8" fill="#666" opacity="0.45"/>
<circle cx="897.3" cy="804.9" r="3.12" fill="#fdfde8" stroke="#efefdc"/>
<rect x="895.6" y="804.5" width="3.4" height="0.8" fill="#666" opacity="0.45"/>
<circle cx="823.0" cy="812.6" r="2.34" fill="#fdfde8" stroke="#efefdc"/>
<rect x="821.7" y="812.2" width="2.6" height="0.8" fill="#666" opacity="0.45"/>
<circle cx="839.8" cy="828.4" r="1.95" fill="#fefefc" stroke="#ececea"/>
<rect x="838.7" y="828.0" width="2.1" height="0.8" fill="#666" opacity="0.45"/>
<circle cx="858.9" cy="828.2" r="1.95" fill="#fefefc" stroke="#ececea"/>
<rect x="857.8" y="827.8" width="2.1" height="0.8" fill="#666" opacity="0.45"/>
<circle cx="888.9" cy="847.4" r="1.95" fill="#fdfde8" stroke="#efefdc"/>
<rect x="887.8" y="847.0" width="2.1" height="0.8" fill="#666" opacity="0.45"/>
<circle cx="792.2" cy="861.9" r="2.34" fill="#fdfde8" stroke="#efefdc"/>
<rect x="790.9" y="861.5" width="2.6" height="0.8" fill="#666" opacity="0.45"/>
<circle cx="803.8" cy="869.3" r="1.95" fill="#fefefc" stroke="#ececea"/>
<rect x="802.7" y="868.9" width="2.1" height="0.8" fill="#666" opacity="0.45"/>
<circle cx="868.0" cy="860.2" r="2.73" fill="#fbfbcc" stroke="#f0f0c4"/>
<rect x="866.5" y="859.8" width="3.0" height="0.8" fill="#666" opacity="0.45"/>
<circle cx="831.9" cy="897.0" r="2.34" fill="#fdfde8" stroke="#efefdc"/>
<rect x="830.6" y="896.6" width="2.6" height="0.8" fill="#666" opacity="0.45"/>
<circle cx="856.7" cy="910.7" r="2.73" fill="#fbfbcc" stroke="#f0f0c4"/>
<rect x="855.2" y="910.3" width="3.0" height="0.8" fill="#666" opacity="0.45"/>
<circle cx="820.6" cy="943.7" r="2.34" fill="#fdfde8" stroke="#efefdc"/>
<rect x="819.3" y="943.3" width="2.6" height="0.8" fill="#666" opacity="0.45"/>
<circle cx="1052.1" cy="757.4" r="9" fill="#fbfbcc" stroke="#f0f0c4"/>
<circle cx="1001.6" cy="715.3" r="2.73" fill="#bcd4f1" stroke="#b3cdee"/>
<rect x="1000.1" y="714.9" width="3.0" height="0.8" fill="#666" opacity="0.45"/>
<circle cx="1095.3" cy="706.3" r="2.73" fill="#fbfbcc" stroke="#f0f0c4"/>
<rect x="1093.8" y="705.9" width="3.0" height="0.8" fill="#666" opacity="0.45"/>
<circle cx="1052.4" cy="726.8" r="2.34" fill="#e0ebf8" stroke="#d6e3f3"/>
<rect x="1051.1" y="726.4" width="2.6" height="0.8" fill="#666" opacity="0.45"/>
<circle cx="1063.7" cy="729.5" r="1.95" fill="#fefefc" stroke="#ececea"/>
<rect x="1062.6" y="729.1" width="2.1" height="0.8" fill="#666" opacity="0.45"/>
<circle cx="1039.5" cy="737.2" r="1.95" fill="#fefefc" stroke="#ececea"/>
<rect x="1038.4" y="736.8" width="2.1" height="0.8" fill="#666" opacity="0.45"/>
<circle cx="1098.6" cy="736.5" r="2.73" fill="#e0ebf8" stroke="#d6e3f3"/>
<rect x="1097.1" y="736.1" width="3.0" height="0.8" fill="#666" opacity="0.45"/>
<circle cx="1093.2" cy="744.7" r="1.95" fill="#fefefc" stroke="#ececea"/>
<rect x="1092.1" y="744.3" width="2.1" height="0.8" fill="#666" opacity="0.45"/>
<circle cx="1101.3" cy="752.1" r="2.73" fill="#bcd4f1" stroke="#b3cdee"/>
<rect x="1099.8" y="751.7" width="3.0" height="0.8" fill="#666" opacity="0.45"/>
<circle cx="1092.6" cy="760.7" r="2.73" fill="#bcd4f1" stroke="#b3cdee"/>
<rect x="1091.1" y="760.3" width="3.0" height="0.8" fill="#666" opacity="0.45"/>
<circle cx="1039.5" cy="758.9" r="2.73" fill="#93b7e6" stroke="#8aafe0"/>
<rect x="1038.0" y="758.5" width="3.0" height="0.8" fill="#666" opacity="0.45"/>
<circle cx="1022.9" cy="761.1" r="1.95" fill="#e0ebf8" stroke="#d6e3f3"/>
<rect x="1021.8" y="760.7" width="2.1" height="0.8" fill="#666" opacity="0.45"/>
<circle cx="1141.8" cy="764.4" r="3.51" fill="#e0ebf8" stroke="#d6e3f3"/>
<rect x="1139.9" y="764.0" width="3.9" height="0.8" fill="#666" opacity="0.45"/>
<circle cx="1099.2" cy="773.2" r="2.73" fill="#bcd4f1" stroke="#b3cdee"/>
<rect x="1097.7" y="772.8" width="3.0" height="0.8" fill="#666" opacity="0.45"/>
<circle cx="1092.9" cy="781.6" r="2.73" fill="#bcd4f1" stroke="#b3cdee"/>
<rect x="1091.4" y="781.2" width="3.0" height="0.8" fill="#666" opacity="0.45"/>
<circle cx="1026.8" cy="776.3" r="1.95" fill="#fefefc" stroke="#ececea"/>
<rect x="1025.7" y="775.9" width="2.1" height="0.8" fill="#666" opacity="0.45"/>
<circle cx="1052.6" cy="780.5" r="2.34" fill="#bcd4f1" stroke="#b3cdee"/>
<rect x="1051.3" y="780.1" width="2.6" height="0.8" fill="#666" opacity="0.45"/>
<circle cx="1029.5" cy="794.7" r="2.73" fill="#bcd4f1" stroke="#b3cdee"/>
<rect x="1028.0" y="794.3" width="3.0" height="0.8" fill="#666" opacity="0.45"/>
<circle cx="1045.8" cy="811.8" r="2.73" fill="#e0ebf8" stroke="#d6e3f3"/>
<rect x="1044.3" y="811.4" width="3.0" height="0.8" fill="#666" opacity="0.45"/>
<circle cx="1055.8" cy="810.7" r="2.34" fill="#fefefc" stroke="#ececea"/>
<rect x="1054.5" y="810.3" width="2.6" height="0.8" fill="#666" opacity="0.45"/>
<circle cx="1005.8" cy="819.8" r="5" fill="#fbfbcc" stroke="#f0f0c4"/>
<circle cx="973.8" cy="805.4" r="2.34" fill="#e0ebf8" stroke="#d6e3f3"/>
<rect x="972.5" y="805.0" width="2.6" height="0.8" fill="#666" opacity="0.45"/>
<circle cx="949.8" cy="821.7" r="2.73" fill="#bcd4f1" stroke="#b3cdee"/>
<rect x="948.3" y="821.3" width="3.0" height="0.8" fill="#666" opacity="0.45"/>
<circle cx="1123.7" cy="811.4" r="2.34" fill="#fdfde8" stroke="#efefdc"/>
<rect x="1122.4" y="811.0" width="2.6" height="0.8" fill="#666" opacity="0.45"/>
<circle cx="1114.0" cy="822.4" r="2.73" fill="#fbfbcc" stroke="#f0f0c4"/>
<rect x="1112.5" y="822.0" width="3.0" height="0.8" fill="#666" opacity="0.45"/>
<circle cx="1141.7" cy="859.0" r="2.34" fill="#fdfde8" stroke="#efefdc"/>
<rect x="1140.4" y="858.6" width="2.6" height="0.8" fill="#666" opacity="0.45"/>
<circle cx="1130.9" cy="871.0" r="2.34" fill="#fdfde8" stroke="#efefdc"/>
<rect x="1129.6" y="870.6" width="2.6" height="0.8" fill="#666" opacity="0.45"/>
<circle cx="1022.7" cy="850.6" r="2.73" fill="#fbfbcc" stroke="#f0f0c4"/>
<rect x="1021.2" y="850.2" width="3.0" height="0.8" fill="#666" opacity="0.45"/>
<circle cx="1035.4" cy="862.6" r="1.95" fill="#fefefc" stroke="#ececea"/>
<rect x="1034.3" y="862.2" width="2.1" height="0.8" fill="#666" opacity="0.45"/>
<circle cx="982.5" cy="866.2" r="2.34" fill="#fdfde8" stroke="#efefdc"/>
<rect x="981.2" y="865.8" width="2.6" height="0.8" fill="#666" opacity="0.45"/>
<circle cx="997.4" cy="871.0" r="1.95" fill="#fefefc" stroke="#ececea"/>
<rect x="996.3" y="870.6" width="2.1" height="0.8" fill="#666" opacity="0.45"/>
<circle cx="1015.0" cy="869.8" r="2.34" fill="#bcd4f1" stroke="#b3cdee"/>
<rect x="1013.7" y="869.4" width="2.6" height="0.8" fill="#666" opacity="0.45"/>
<circle cx="1001.7" cy="911.9" r="2.34" fill="#fbfbcc" stroke="#f0f0c4"/>
<rect x="1000.4" y="911.5" width="2.6" height="0.8" fill="#666" opacity="0.45"/>
<circle cx="1055.1" cy="868.1" r="5" fill="#fefefc" stroke="#ececea"/>
<circle cx="1096.0" cy="893.9" r="1.95" fill="#fefefc" stroke="#ececea"/>
<rect x="1094.9" y="893.5" width="2.1" height="0.8" fill="#666" opacity="0.45"/>
<circle cx="1020.3" cy="908.3" r="2.34" fill="#fefefc" stroke="#ececea"/>
<rect x="1019.0" y="907.9" width="2.6" height="0.8" fill="#666" opacity="0.45"/>
<circle cx="1067.2" cy="909.0" r="2.34" fill="#bcd4f1" stroke="#b3cdee"/>
<rect x="1065.9" y="908.6" width="2.6" height="0.8" fill="#666" opacity="0.45"/>
<circle cx="1085.2" cy="906.6" r="2.34" fill="#e0ebf8" stroke="#d6e3f3"/>
<rect x="1083.9" y="906.2" width="2.6" height="0.8" fill="#666" opacity="0.45"/>
<circle cx="1032.8" cy="922.7" r="1.95" fill="#fefefc" stroke="#ececea"/>
<rect x="1031.7" y="922.3" width="2.1" height="0.8" fill="#666" opacity="0.45"/>
<circle cx="1051.0" cy="922.7" r="1.95" fill="#fefefc" stroke="#ececea"/>
<rect x="1049.9" y="922.3" width="2.1" height="0.8" fill="#666" opacity="0.45"/>
<circle cx="1037.8" cy="970.4" r="2.34" fill="#fefefc" stroke="#ececea"/>
<rect x="1036.5" y="970.0" width="2.6" height="0.8" fill="#666" opacity="0.45"/>
<circle cx="1217.0" cy="792.9" r="2.73" fill="#fdfde8" stroke="#efefdc"/>
<rect x="1215.5" y="792.5" width="3.0" height="0.8" fill="#666" opacity="0.45"/>
<circle cx="1278.1" cy="792.9" r="2.34" fill="#fdfde8" stroke="#efefdc"/>
<rect x="1276.8" y="792.5" width="2.6" height="0.8" fill="#666" opacity="0.45"/>
<circle cx="1269.2" cy="808.0" r="1.95" fill="#fefefc" stroke="#ececea"/>
<rect x="1268.1" y="807.6" width="2.1" height="0.8" fill="#666" opacity="0.45"/>
<circle cx="1240.3" cy="846.5" r="2.73" fill="#fbfbcc" stroke="#f0f0c4"/>
<rect x="1238.8" y="846.1" width="3.0" height="0.8" fill="#666" opacity="0.45"/>
<circle cx="1280.7" cy="872.2" r="1.95" fill="#fefefc" stroke="#ececea"/>
<rect x="1279.6" y="871.8" width="2.1" height="0.8" fill="#666" opacity="0.45"/>
<circle cx="1249.5" cy="898.2" r="2.73" fill="#fbfbcc" stroke="#f0f0c4"/>
<rect x="1248.0" y="897.8" width="3.0" height="0.8" fill="#666" opacity="0.45"/>
<circle cx="1282.0" cy="933.6" r="2.34" fill="#fdfde8" stroke="#efefdc"/>
<rect x="1280.7" y="933.2" width="2.6" height="0.8" fill="#666" opacity="0.45"/>
<circle cx="1253.1" cy="949.9" r="1.95" fill="#fefefc" stroke="#ececea"/>
<rect x="1252.0" y="949.5" width="2.1" height="0.8" fill="#666" opacity="0.45"/>
<circle cx="1280.0" cy="770.0" r="1.95" fill="#fdfde8" stroke="#efefdc"/>
<rect x="1278.9" y="769.6" width="2.1" height="0.8" fill="#666" opacity="0.45"/>
<circle cx="569.0" cy="983.4" r="2.34" fill="#fbfbcc" stroke="#f0f0c4"/>
<rect x="567.7" y="983.0" width="2.6" height="0.8" fill="#666" opacity="0.45"/>
<circle cx="557.0" cy="994.9" r="2.34" fill="#fdfde8" stroke="#efefdc"/>
<rect x="555.7" y="994.5" width="2.6" height="0.8" fill="#666" opacity="0.45"/>
<circle cx="545.0" cy="1006.2" r="2.34" fill="#fefefc" stroke="#ececea"/>
<rect x="543.7" y="1005.8" width="2.6" height="0.8" fill="#666" opacity="0.45"/>
<circle cx="533.0" cy="1017.3" r="2.34" fill="#fdfde8" stroke="#efefdc"/>
<rect x="531.7" y="1016.9" width="2.6" height="0.8" fill="#666" opacity="0.45"/>
<circle cx="520.9" cy="1028.6" r="2.34" fill="#fdfde8" stroke="#efefdc"/>
<rect x="519.6" y="1028.2" width="2.6" height="0.8" fill="#666" opacity="0.45"/>
<circle cx="593.1" cy="996.1" r="2.34" fill="#fefefc" stroke="#ececea"/>
<rect x="591.8" y="995.7" width="2.6" height="0.8" fill="#666" opacity="0.45"/>
<circle cx="581.8" cy="990.6" r="1.95" fill="#fefefc" stroke="#ececea"/>
<rect x="580.7" y="990.2" width="2.1" height="0.8" fill="#666" opacity="0.45"/>
<circle cx="603.4" cy="989.6" r="2.34" fill="#fdfde8" stroke="#efefdc"/>
<rect x="602.1" y="989.2" width="2.6" height="0.8" fill="#666" opacity="0.45"/>
<circle cx="613.5" cy="983.3" r="1.95" fill="#e0ebf8" stroke="#d6e3f3"/>
<rect x="612.4" y="982.9" width="2.1" height="0.8" fill="#666" opacity="0.45"/>
<circle cx="592.6" cy="1008.6" r="2.34" fill="#bcd4f1" stroke="#b3cdee"/>
<rect x="591.3" y="1008.2" width="2.6" height="0.8" fill="#666" opacity="0.45"/>
<circle cx="636.4" cy="994.2" r="2.73" fill="#fbfbcc" stroke="#f0f0c4"/>
<rect x="634.9" y="993.8" width="3.0" height="0.8" fill="#666" opacity="0.45"/>
<circle cx="639.0" cy="983.3" r="1.95" fill="#fdfde8" stroke="#efefdc"/>
<rect x="637.9" y="982.9" width="2.1" height="0.8" fill="#666" opacity="0.45"/>
<circle cx="626.3" cy="997.1" r="1.95" fill="#fdfde8" stroke="#efefdc"/>
<rect x="625.2" y="996.7" width="2.1" height="0.8" fill="#666" opacity="0.45"/>
<circle cx="644.3" cy="1001.4" r="1.95" fill="#fefefc" stroke="#ececea"/>
<rect x="643.2" y="1001.0" width="2.1" height="0.8" fill="#666" opacity="0.45"/>
<circle cx="665.5" cy="983.3" r="2.34" fill="#e0ebf8" stroke="#d6e3f3"/>
<rect x="664.2" y="982.9" width="2.6" height="0.8" fill="#666" opacity="0.45"/>
<circle cx="657.0" cy="991.8" r="1.95" fill="#fdfde8" stroke="#efefdc"/>
<rect x="655.9" y="991.4" width="2.1" height="0.8" fill="#666" opacity="0.45"/>
<circle cx="674.4" cy="991.8" r="1.95" fill="#fdfde8" stroke="#efefdc"/>
<rect x="673.3" y="991.4" width="2.1" height="0.8" fill="#666" opacity="0.45"/>
<circle cx="665.5" cy="1000.4" r="1.95" fill="#fefefc" stroke="#ececea"/>
<rect x="664.4" y="1000.0" width="2.1" height="0.8" fill="#666" opacity="0.45"/>
<circle cx="686.9" cy="983.3" r="2.34" fill="#bcd4f1" stroke="#b3cdee"/>
<rect x="685.6" y="982.9" width="2.6" height="0.8" fill="#666" opacity="0.45"/>
<circle cx="698.9" cy="985.8" r="2.73" fill="#e0ebf8" stroke="#d6e3f3"/>
<rect x="697.4" y="985.4" width="3.0" height="0.8" fill="#666" opacity="0.45"/>
<circle cx="710.9" cy="988.2" r="2.34" fill="#fdfde8" stroke="#efefdc"/>
<rect x="709.6" y="987.8" width="2.6" height="0.8" fill="#666" opacity="0.45"/>
<circle cx="723.0" cy="990.6" r="1.95" fill="#fefefc" stroke="#ececea"/>
<rect x="721.9" y="990.2" width="2.1" height="0.8" fill="#666" opacity="0.45"/>
<circle cx="735.7" cy="983.3" r="1.95" fill="#fefefc" stroke="#ececea"/>
<rect x="734.6" y="982.9" width="2.1" height="0.8" fill="#666" opacity="0.45"/>
<circle cx="746.0" cy="995.4" r="2.34" fill="#fdfde8" stroke="#efefdc"/>
<rect x="744.7" y="995.0" width="2.6" height="0.8" fill="#666" opacity="0.45"/>
<circle cx="755.7" cy="1007.4" r="2.34" fill="#fdfde8" stroke="#efefdc"/>
<rect x="754.4" y="1007.0" width="2.6" height="0.8" fill="#666" opacity="0.45"/>
<circle cx="765.3" cy="1019.4" r="2.34" fill="#fbfbcc" stroke="#f0f0c4"/>
<rect x="764.0" y="1019.0" width="2.6" height="0.8" fill="#666" opacity="0.45"/>
<circle cx="783.8" cy="982.9" r="2.34" fill="#fdfde8" stroke="#efefdc"/>
<rect x="782.5" y="982.5" width="2.6" height="0.8" fill="#666" opacity="0.45"/>
<circle cx="777.8" cy="992.0" r="1.95" fill="#fdfde8" stroke="#efefdc"/>
<rect x="776.7" y="991.6" width="2.1" height="0.8" fill="#666" opacity="0.45"/>
<circle cx="789.1" cy="993.0" r="2.34" fill="#fdfde8" stroke="#efefdc"/>
<rect x="787.8" y="992.6" width="2.6" height="0.8" fill="#666" opacity="0.45"/>
<circle cx="801.4" cy="983.3" r="1.95" fill="#fdfde8" stroke="#efefdc"/>
<rect x="800.3" y="982.9" width="2.1" height="0.8" fill="#666" opacity="0.45"/>
<circle cx="813.4" cy="986.0" r="1.95" fill="#fdfde8" stroke="#efefdc"/>
<rect x="812.3" y="985.6" width="2.1" height="0.8" fill="#666" opacity="0.45"/>
<circle cx="825.4" cy="988.4" r="1.95" fill="#e0ebf8" stroke="#d6e3f3"/>
<rect x="824.3" y="988.0" width="2.1" height="0.8" fill="#666" opacity="0.45"/>
<circle cx="838.4" cy="983.3" r="2.34" fill="#e0ebf8" stroke="#d6e3f3"/>
<rect x="837.1" y="982.9" width="2.6" height="0.8" fill="#666" opacity="0.45"/>
<circle cx="848.8" cy="995.4" r="1.95" fill="#fdfde8" stroke="#efefdc"/>
<rect x="847.7" y="995.0" width="2.1" height="0.8" fill="#666" opacity="0.45"/>
<circle cx="859.6" cy="1007.4" r="2.34" fill="#fbfbcc" stroke="#f0f0c4"/>
<rect x="858.3" y="1007.0" width="2.6" height="0.8" fill="#666" opacity="0.45"/>
<circle cx="872.3" cy="983.3" r="2.34" fill="#fbfbcc" stroke="#f0f0c4"/>
<rect x="871.0" y="982.9" width="2.6" height="0.8" fill="#666" opacity="0.45"/>
<circle cx="883.2" cy="995.4" r="1.95" fill="#fdfde8" stroke="#efefdc"/>
<rect x="882.1" y="995.0" width="2.1" height="0.8" fill="#666" opacity="0.45"/>
<circle cx="894.0" cy="1007.4" r="2.34" fill="#fdf53a" stroke="#f0e838"/>
<rect x="892.7" y="1007.0" width="2.6" height="0.8" fill="#666" opacity="0.45"/>
<circle cx="906.0" cy="988.2" r="1.95" fill="#fbfbcc" stroke="#f0f0c4"/>
<rect x="904.9" y="987.8" width="2.1" height="0.8" fill="#666" opacity="0.45"/>
<circle cx="918.5" cy="985.8" r="1.95" fill="#fdfde8" stroke="#efefdc"/>
<rect x="917.4" y="985.4" width="2.1" height="0.8" fill="#666" opacity="0.45"/>
<circle cx="930.8" cy="983.3" r="1.95" fill="#fbfbcc" stroke="#f0f0c4"/>
<rect x="929.7" y="982.9" width="2.1" height="0.8" fill="#666" opacity="0.45"/>
<circle cx="943.8" cy="983.3" r="1.95" fill="#fbfbcc" stroke="#f0f0c4"/>
<rect x="942.7" y="982.9" width="2.1" height="0.8" fill="#666" opacity="0.45"/>
<circle cx="955.8" cy="985.8" r="1.95" fill="#fdfde8" stroke="#efefdc"/>
<rect x="954.7" y="985.4" width="2.1" height="0.8" fill="#666" opacity="0.45"/>
<circle cx="967.8" cy="988.2" r="1.95" fill="#fbfbcc" stroke="#f0f0c4"/>
<rect x="966.7" y="987.8" width="2.1" height="0.8" fill="#666" opacity="0.45"/>
<circle cx="980.6" cy="983.3" r="1.95" fill="#e0ebf8" stroke="#d6e3f3"/>
<rect x="979.5" y="982.9" width="2.1" height="0.8" fill="#666" opacity="0.45"/>
<circle cx="992.6" cy="985.8" r="1.95" fill="#fdfde8" stroke="#efefdc"/>
<rect x="991.5" y="985.4" width="2.1" height="0.8" fill="#666" opacity="0.45"/>
<circle cx="1004.6" cy="988.2" r="1.95" fill="#fbfbcc" stroke="#f0f0c4"/>
<rect x="1003.5" y="987.8" width="2.1" height="0.8" fill="#666" opacity="0.45"/>
<circle cx="1017.1" cy="983.3" r="1.95" fill="#fdf53a" stroke="#f0e838"/>
<rect x="1016.0" y="982.9" width="2.1" height="0.8" fill="#666" opacity="0.45"/>
<circle cx="1029.1" cy="983.3" r="1.95" fill="#bcd4f1" stroke="#b3cdee"/>
<rect x="1028.0" y="982.9" width="2.1" height="0.8" fill="#666" opacity="0.45"/>
<circle cx="1041.9" cy="983.3" r="1.95" fill="#e0ebf8" stroke="#d6e3f3"/>
<rect x="1040.8" y="982.9" width="2.1" height="0.8" fill="#666" opacity="0.45"/>
<circle cx="1053.9" cy="983.3" r="1.95" fill="#bcd4f1" stroke="#b3cdee"/>
<rect x="1052.8" y="982.9" width="2.1" height="0.8" fill="#666" opacity="0.45"/>
<circle cx="1066.7" cy="983.3" r="1.95" fill="#fbfbcc" stroke="#f0f0c4"/>
<rect x="1065.6" y="982.9" width="2.1" height="0.8" fill="#666" opacity="0.45"/>
<circle cx="1078.7" cy="983.3" r="1.95" fill="#fbfbcc" stroke="#f0f0c4"/>
<rect x="1077.6" y="982.9" width="2.1" height="0.8" fill="#666" opacity="0.45"/>
<circle cx="1091.2" cy="983.3" r="1.95" fill="#fefefc" stroke="#ececea"/>
<rect x="1090.1" y="982.9" width="2.1" height="0.8" fill="#666" opacity="0.45"/>
<circle cx="1103.7" cy="983.3" r="1.95" fill="#fbfbcc" stroke="#f0f0c4"/>
<rect x="1102.6" y="982.9" width="2.1" height="0.8" fill="#666" opacity="0.45"/>
<circle cx="1116.5" cy="983.3" r="1.95" fill="#fbfbcc" stroke="#f0f0c4"/>
<rect x="1115.4" y="982.9" width="2.1" height="0.8" fill="#666" opacity="0.45"/>
<circle cx="1128.5" cy="983.3" r="1.95" fill="#fefefc" stroke="#ececea"/>
<rect x="1127.4" y="982.9" width="2.1" height="0.8" fill="#666" opacity="0.45"/>
<circle cx="1141.0" cy="983.3" r="1.95" fill="#fbfbcc" stroke="#f0f0c4"/>
<rect x="1139.9" y="982.9" width="2.1" height="0.8" fill="#666" opacity="0.45"/>
<circle cx="1153.0" cy="983.3" r="1.95" fill="#bcd4f1" stroke="#b3cdee"/>
<rect x="1151.9" y="982.9" width="2.1" height="0.8" fill="#666" opacity="0.45"/>
<circle cx="1165.8" cy="983.3" r="1.95" fill="#fbfbcc" stroke="#f0f0c4"/>
<rect x="1164.7" y="982.9" width="2.1" height="0.8" fill="#666" opacity="0.45"/>
<circle cx="1177.8" cy="983.3" r="1.95" fill="#fbfbcc" stroke="#f0f0c4"/>
<rect x="1176.7" y="982.9" width="2.1" height="0.8" fill="#666" opacity="0.45"/>
<circle cx="1191.0" cy="983.3" r="1.95" fill="#fefefc" stroke="#ececea"/>
<rect x="1189.9" y="982.9" width="2.1" height="0.8" fill="#666" opacity="0.45"/>
<circle cx="1203.0" cy="983.3" r="1.95" fill="#fefefc" stroke="#ececea"/>
<rect x="1201.9" y="982.9" width="2.1" height="0.8" fill="#666" opacity="0.45"/>
<circle cx="1215.6" cy="983.3" r="1.95" fill="#fbfbcc" stroke="#f0f0c4"/>
<rect x="1214.5" y="982.9" width="2.1" height="0.8" fill="#666" opacity="0.45"/>
<circle cx="1227.6" cy="983.3" r="1.95" fill="#fefefc" stroke="#ececea"/>
<rect x="1226.5" y="982.9" width="2.1" height="0.8" fill="#666" opacity="0.45"/>
<circle cx="903.5" cy="435.0" r="1.95" fill="#fdfde8" stroke="#efefdc"/>
<rect x="902.4" y="434.6" width="2.1" height="0.8" fill="#666" opacity="0.45"/>
<circle cx="903.5" cy="488.8" r="1.95" fill="#fdfde8" stroke="#efefdc"/>
<rect x="902.4" y="488.4" width="2.1" height="0.8" fill="#666" opacity="0.45"/>
</g>
<text x="913.1" y="590.5" font-family="Liberation Serif" font-size="7" text-anchor="middle" fill="#333">MCM1</text>
<text x="1052.1" y="759.9" font-family="Liberation Serif" font-size="7" text-anchor="middle" fill="#333">RAP1</text>
<text x="906.0" y="729.3" font-family="Liberation Serif" font-size="5.5" text-anchor="middle" fill="#333">GAL4</text>
<text x="946.3" y="695.2" font-family="Liberation Serif" font-size="5" text-anchor="middle" fill="#333">MIG1</text>
<text x="1005.8" y="821.2" font-family="Liberation Serif" font-size="4" text-anchor="middle" fill="#333">GCN4</text>
<text x="1055.1" y="869.5" font-family="Liberation Serif" font-size="4" text-anchor="middle" fill="#333">SWI4</text>
<text x="1061.8" y="525.1" font-family="Liberation Serif" font-size="4" text-anchor="middle" fill="#333">CRS1</text>
<text x="799.8" y="550.0" font-family="Liberation Serif" font-size="3.5" text-anchor="middle" fill="#333">MSN4</text>
<text x="1420.5" y="634.5" font-family="Liberation Serif" font-size="3.5" text-anchor="middle" fill="#333">LEU3</text>
</svg>
<svg class="a" style="left:516px;top:1115px" width="24" height="19" viewBox="0 0 24 19"><rect x="1.0" y="1.0" width="4.6" height="4.4" rx="0.8" fill="#333"/><rect x="6.7" y="1.0" width="4.6" height="4.4" rx="0.8" fill="#333"/><rect x="12.4" y="1.0" width="4.6" height="4.4" rx="0.8" fill="#333"/><rect x="18.1" y="1.0" width="4.6" height="4.4" rx="0.8" fill="#333"/><rect x="1.0" y="6.8" width="4.6" height="4.4" rx="0.8" fill="#333"/><rect x="6.7" y="6.8" width="4.6" height="4.4" rx="0.8" fill="#333"/><rect x="12.4" y="6.8" width="4.6" height="4.4" rx="0.8" fill="#333"/><rect x="18.1" y="6.8" width="4.6" height="4.4" rx="0.8" fill="#333"/><rect x="1.0" y="12.6" width="4.6" height="4.4" rx="0.8" fill="#333"/><rect x="6.7" y="12.6" width="4.6" height="4.4" rx="0.8" fill="#333"/><rect x="12.4" y="12.6" width="4.6" height="4.4" rx="0.8" fill="#333"/><rect x="18.1" y="12.6" width="4.6" height="4.4" rx="0.8" fill="#333"/></svg>
<div class="a" style="left:544px;top:1110px;width:32px;height:31px;background:#cdcdcd;border:1px solid #b4b4b4"></div>
<svg class="a" style="left:550px;top:1115px" width="21" height="21" viewBox="0 0 21 21"><rect x="1" y="1" width="19" height="19" rx="3.5" fill="#000"/><g fill="#fff"><circle cx="13.5" cy="6" r="2.4"/><circle cx="6.5" cy="10.5" r="2.4"/><circle cx="13.5" cy="15" r="2.4"/></g><path d="M13.5 6L6.5 10.5 13.5 15" stroke="#fff" stroke-width="1.6" fill="none"/></svg>
<div class="a" style="left:582px;top:1112px;width:1px;height:28px;background:#d2d2d2"></div>
<svg class="a" style="left:595px;top:1115px" width="21" height="21" viewBox="0 0 21 21"><rect x="1" y="1" width="19" height="19" rx="3.5" fill="#000"/><path d="M5.5 15.5l8-8" stroke="#fff" stroke-width="2.4"/><path d="M8 5h8v8z" fill="#fff"/></svg>
<div class="a" style="left:628px;top:1112px;width:1px;height:28px;background:#d2d2d2"></div>
<div class="t" style="left:634px;top:1119px;font-size:11.7px;color:#111;">Yeast Perturbation (Restore Style)</div>
<div class="a" style="left:1286px;top:1112px;width:1px;height:28px;background:#d2d2d2"></div>
<svg class="a" style="left:1298px;top:1114px" width="24" height="22" viewBox="0 0 24 22"><path d="M1 1h10l5 5v4H9v4h7v7H1z" fill="#000"/><path d="M11 1v5h5" fill="#fff"/><path d="M11 1l5 5h-5z" fill="#ededed" opacity="0.0"/><path d="M9 12h10" stroke="#000" stroke-width="2.5"/><path d="M17.5 7.5L23 12l-5.5 4.5z" fill="#000"/></svg>
<div class="a" style="left:1331px;top:1112px;width:1px;height:28px;background:#d2d2d2"></div>
<svg class="a" style="left:1344px;top:1115px" width="20" height="20" viewBox="0 0 20 20"><rect x="8" y="0" width="4" height="4" fill="#333"/><rect x="4" y="4" width="4" height="4" fill="#333"/><rect x="12" y="4" width="4" height="4" fill="#333"/><rect x="0" y="8" width="4" height="4" fill="#333"/><rect x="16" y="8" width="4" height="4" fill="#333"/><rect x="4" y="12" width="4" height="4" fill="#333"/><rect x="12" y="12" width="4" height="4" fill="#333"/><rect x="8" y="16" width="4" height="4" fill="#333"/></svg>
<div class="a" style="left:1376px;top:1109px;width:32px;height:32px;background:#cdcdcd;border:1px solid #b4b4b4"></div>
<svg class="a" style="left:1381px;top:1115px" width="21" height="20" viewBox="0 0 21 20"><rect x="1.5" y="1.5" width="18" height="17" fill="none" stroke="#111" stroke-width="2.6" stroke-dasharray="3.2 2"/><circle cx="7.5" cy="7.3" r="3.6" fill="#000"/><circle cx="13.5" cy="12.8" r="3.6" fill="#000"/></svg>
<svg class="a" style="left:1413px;top:1115px" width="21" height="20" viewBox="0 0 21 20"><rect x="1.5" y="1.5" width="18" height="17" fill="none" stroke="#333" stroke-width="2.6" stroke-dasharray="3.2 2"/><path d="M5 6l8 8M6 3l10 10M4 10l6 6" stroke="#333" stroke-width="1.6"/></svg>
<svg class="a" style="left:1445px;top:1115px" width="21" height="20" viewBox="0 0 21 20"><rect x="1.5" y="1.5" width="18" height="17" fill="none" stroke="#333" stroke-width="2.6" stroke-dasharray="3.2 2"/><rect x="5" y="4.5" width="11" height="11" fill="none" stroke="#333" stroke-width="1.3"/><path d="M7.5 7h6M10.5 7v7M9 14h3" stroke="#333" stroke-width="1.5" fill="none"/></svg>
<svg class="a" style="left:1476px;top:1113px" width="24" height="23" viewBox="0 0 24 23"><path d="M4 1v9M1.5 3.5L4 1l2.5 2.5M1.5 7.5L4 10l2.5-2.5M1 5.5h6" stroke="#333" stroke-width="1.1" fill="none"/><path d="M7 22L13 6h3l6 16h-4l-1.3-4h-6.4L9 22zM11.2 15h4.6L13.5 8.5z" fill="#333"/></svg>
<div class="a" style="left:1510px;top:1112px;width:1px;height:28px;background:#d2d2d2"></div>
<svg class="a" style="left:1516px;top:1113px" width="10" height="10" viewBox="0 0 10 10"><rect x="0.5" y="0.5" width="9" height="9" rx="1.5" fill="#8a8a8a"/><path d="M2.5 5l2 2 3.5-4" stroke="#fff" stroke-width="1.3" fill="none"/></svg>
<div class="t" style="left:1575px;top:1113px;font-size:11px;color:#777;">0</div>
<div class="t" style="left:1575px;top:1127px;font-size:11px;color:#777;">0</div>
<div class="a" style="left:1587px;top:1114px;width:1px;height:22px;background:#d2d2d2"></div>
<svg class="a" style="left:1591px;top:1113px" width="14" height="10" viewBox="0 0 14 10"><path d="M1 5C3 2 5 1 7 1s4 1 6 4c-2 3-4 4-6 4S3 8 1 5z" fill="none" stroke="#999" stroke-width="1.1"/><path d="M10 0L5 10" stroke="#999" stroke-width="1.2"/><circle cx="6" cy="5" r="1.8" fill="#999"/></svg>
<div class="t" style="left:1650px;top:1113px;font-size:11px;color:#777;">0</div>
<div class="t" style="left:1650px;top:1127px;font-size:11px;color:#777;">0</div>
<div class="a" style="left:1665px;top:1112px;width:1px;height:28px;background:#d2d2d2"></div>
<svg class="a" style="left:1678px;top:1116px" width="20" height="20" viewBox="0 0 20 20"><circle cx="9.5" cy="9.5" r="6" fill="none" stroke="#333" stroke-width="2"/><path d="M9.5 0v5M9.5 14v5M0 9.5h5M14 9.5h5" stroke="#333" stroke-width="2"/><path d="M9.5 0L7.3 3h4.4zM9.5 19l-2.2-3h4.4zM0 9.5l3-2.2v4.4zM19 9.5l-3-2.2v4.4z" fill="#333"/></svg>
<div class="t" style="left:516px;top:1154px;font-size:11.8px;color:#111;">Node Table</div>
<svg class="a" style="left:583px;top:1156px" width="8" height="6" viewBox="0 0 8 6"><path d="M0.5 0.5h7l-3.5 5z" fill="#111"/></svg>
<svg class="a" style="left:1645px;top:1153px" width="13" height="12" viewBox="0 0 13 12"><rect x="1.75" y="1.75" width="9.5" height="8.5" rx="1.3" fill="none" stroke="#000" stroke-width="1.6"/><rect x="1" y="1" width="11" height="2.8" rx="1" fill="#000"/></svg>
<svg class="a" style="left:1668px;top:1152px" width="13" height="13" viewBox="0 0 13 13"><path d="M6.3 0.8L10.2 4.7 9.1 5.6 8 5.2 6 7.2 6.3 10 5.6 10.7 0.9 6 1.6 5.3 4.4 5.6 6.4 3.6 6 2.2Z" fill="none" stroke="#111" stroke-width="0.9" stroke-linejoin="round"/><path d="M3.4 8L0.6 10.8" stroke="#111" stroke-width="1.3"/></svg>
<div class="a" style="left:1690px;top:1161px;width:11px;height:4px;background:#000;border-radius:1px"></div>
<svg class="a" style="left:516px;top:1181px" width="16" height="16" viewBox="0 0 16 16"><path d="M8 0.8l1.3 2.2 2.5-.7.6 2.5 2.5.7-.7 2.5 2 1.4-2 1.8.7 2.5-2.5.6-.6 2.5-2.5-.7L8 15.2 6.7 13l-2.5.7-.6-2.5-2.5-.6.7-2.5L-.2 8l2-1.5-.7-2.5 2.5-.6.6-2.5 2.5.7z" fill="#111"/><circle cx="8" cy="8" r="2.6" fill="#ededed"/></svg>
<svg class="a" style="left:548px;top:1177px" width="23" height="22" viewBox="0 0 23 22"><rect x="1.5" y="1.5" width="8.5" height="19" rx="1.2" fill="none" stroke="#111" stroke-width="2.2"/><path d="M13.5 1.5h6.5a1.2 1.2 0 0 1 1.2 1.2v16.6a1.2 1.2 0 0 1-1.2 1.2h-6.5" fill="none" stroke="#111" stroke-width="2" stroke-dasharray="3 2"/></svg>
<svg class="a" style="left:590px;top:1177px" width="18" height="22" viewBox="0 0 18 22"><path d="M9 1.2H3a2 2 0 0 0-2 2v15.6a2 2 0 0 0 2 2h5" fill="none" stroke="#111" stroke-width="2"/><path d="M7 1.2h3.5v4" stroke="#111" stroke-width="2" fill="none"/><circle cx="11" cy="12" r="5.6" fill="#111"/><path d="M8 12h6M11 9v6" stroke="#fff" stroke-width="1.8"/></svg>
<svg class="a" style="left:626px;top:1177px" width="18" height="22" viewBox="0 0 18 22"><path d="M9 1.2H3a2 2 0 0 0-2 2v15.6a2 2 0 0 0 2 2h5" fill="none" stroke="#111" stroke-width="2"/><path d="M7 1.2h3.5v4" stroke="#111" stroke-width="2" fill="none"/><circle cx="11" cy="12" r="5.6" fill="#111"/><path d="M8 12h6" stroke="#fff" stroke-width="2"/></svg>
<div class="t" style="left:673px;top:1178px;font-size:18.5px;font-family:'Liberation Serif',serif;font-style:italic;letter-spacing:0.8px;color:#c8c8c8">f(x)</div>
<svg class="a" style="left:715px;top:1180px" width="19" height="19" viewBox="0 0 19 19"><circle cx="7.5" cy="7.5" r="5.6" fill="none" stroke="#111" stroke-width="2.6"/><path d="M11.5 11.5l5.5 5.5" stroke="#111" stroke-width="3" stroke-linecap="round"/></svg>
<svg class="a" style="left:769px;top:1177px" width="23" height="22" viewBox="0 0 23 22"><path d="M8 1h7.5l5 5v15H8v-5h4v-8H8z" fill="#111"/><path d="M15.5 1v5h5" fill="none" stroke="#ededed" stroke-width="1"/><path d="M1 12h9" stroke="#111" stroke-width="2.4"/><path d="M9 7.5L14 12l-5 4.5z" fill="#111"/></svg>
<svg class="a" style="left:804px;top:1177px" width="25" height="22" viewBox="0 0 25 22"><path d="M1 1h7.5l5 5v4H8v4h5.5v7H1z" fill="#111"/><path d="M8.5 1v5h5" fill="none" stroke="#ededed" stroke-width="1"/><path d="M9 12h10" stroke="#111" stroke-width="2.4"/><path d="M18 7.5L23.5 12 18 16.5z" fill="#111"/></svg>
<div class="a" style="left:507px;top:1207px;width:1186px;height:24px;background:#efefef;border-bottom:1px solid #d3d3d3"></div>
<div class="a" style="left:507px;top:1231px;width:19px;height:90px;background:#f3f3f3"></div>
<svg class="a" style="left:509px;top:1210px" width="16" height="19" viewBox="0 0 16 19"><path d="M15 1v17H1z" fill="#bdbdbd"/></svg>
<div class="a" style="left:509px;top:1246px;width:16px;height:1px;background:#d6d6d6"></div>
<div class="a" style="left:509px;top:1262px;width:16px;height:1px;background:#d6d6d6"></div>
<div class="a" style="left:509px;top:1278px;width:16px;height:1px;background:#d6d6d6"></div>
<div class="a" style="left:509px;top:1294px;width:16px;height:1px;background:#d6d6d6"></div>
<div class="a" style="left:509px;top:1310px;width:16px;height:1px;background:#d6d6d6"></div>
<div class="a" style="left:526px;top:1207px;width:1px;height:114px;background:#dadada"></div>
<div class="a" style="left:675px;top:1210px;width:1px;height:18px;background:#d3d3d3"></div>
<div class="a" style="left:766px;top:1210px;width:1px;height:18px;background:#d3d3d3"></div>
<div class="a" style="left:841px;top:1210px;width:1px;height:18px;background:#d3d3d3"></div>
<div class="a" style="left:931px;top:1210px;width:1px;height:18px;background:#d3d3d3"></div>
<div class="a" style="left:1145px;top:1210px;width:1px;height:18px;background:#d3d3d3"></div>
<div class="a" style="left:1330px;top:1210px;width:1px;height:18px;background:#d3d3d3"></div>
<div class="a" style="left:1502px;top:1210px;width:1px;height:18px;background:#d3d3d3"></div>
<div class="a" style="left:1681px;top:1210px;width:1px;height:18px;background:#d3d3d3"></div>
<svg class="a" style="left:531px;top:1212px" width="13" height="13" viewBox="0 0 13 13"><g fill="#b3b3b3"><rect x="4.8" y="0.5" width="3.4" height="3.4" rx="1"/><rect x="0.5" y="8.5" width="3.4" height="3.4" rx="1"/><rect x="4.8" y="8.5" width="3.4" height="3.4" rx="1"/><rect x="9.1" y="8.5" width="3.4" height="3.4" rx="1"/></g><path d="M6.5 3v3M2.2 8.5V6h8.6v2.5M6.5 6v2.5" stroke="#b3b3b3" stroke-width="1" fill="none"/></svg>
<svg class="a" style="left:549px;top:1211px" width="10" height="14" viewBox="0 0 10 14"><path d="M2.2 6.5V4.5a2.8 2.8 0 0 1 5.6 0v2" fill="none" stroke="#b8b8b8" stroke-width="1.7"/><rect x="0.5" y="6" width="9" height="7.5" rx="1" fill="#b8b8b8"/></svg>
<svg class="a" style="left:680px;top:1211px" width="10" height="14" viewBox="0 0 10 14"><path d="M2.2 6.5V4.5a2.8 2.8 0 0 1 5.6 0v2" fill="none" stroke="#b8b8b8" stroke-width="1.7"/><rect x="0.5" y="6" width="9" height="7.5" rx="1" fill="#b8b8b8"/></svg>
<svg class="a" style="left:771px;top:1212px" width="13" height="13" viewBox="0 0 13 13"><g fill="#b3b3b3"><rect x="4.8" y="0.5" width="3.4" height="3.4" rx="1"/><rect x="0.5" y="8.5" width="3.4" height="3.4" rx="1"/><rect x="4.8" y="8.5" width="3.4" height="3.4" rx="1"/><rect x="9.1" y="8.5" width="3.4" height="3.4" rx="1"/></g><path d="M6.5 3v3M2.2 8.5V6h8.6v2.5M6.5 6v2.5" stroke="#b3b3b3" stroke-width="1" fill="none"/></svg>
<svg class="a" style="left:846px;top:1212px" width="13" height="13" viewBox="0 0 13 13"><g fill="#b3b3b3"><rect x="4.8" y="0.5" width="3.4" height="3.4" rx="1"/><rect x="0.5" y="8.5" width="3.4" height="3.4" rx="1"/><rect x="4.8" y="8.5" width="3.4" height="3.4" rx="1"/><rect x="9.1" y="8.5" width="3.4" height="3.4" rx="1"/></g><path d="M6.5 3v3M2.2 8.5V6h8.6v2.5M6.5 6v2.5" stroke="#b3b3b3" stroke-width="1" fill="none"/></svg>
<svg class="a" style="left:936px;top:1212px" width="13" height="13" viewBox="0 0 13 13"><g fill="#b3b3b3"><rect x="4.8" y="0.5" width="3.4" height="3.4" rx="1"/><rect x="0.5" y="8.5" width="3.4" height="3.4" rx="1"/><rect x="4.8" y="8.5" width="3.4" height="3.4" rx="1"/><rect x="9.1" y="8.5" width="3.4" height="3.4" rx="1"/></g><path d="M6.5 3v3M2.2 8.5V6h8.6v2.5M6.5 6v2.5" stroke="#b3b3b3" stroke-width="1" fill="none"/></svg>
<svg class="a" style="left:1150px;top:1212px" width="13" height="13" viewBox="0 0 13 13"><g fill="#b3b3b3"><rect x="4.8" y="0.5" width="3.4" height="3.4" rx="1"/><rect x="0.5" y="8.5" width="3.4" height="3.4" rx="1"/><rect x="4.8" y="8.5" width="3.4" height="3.4" rx="1"/><rect x="9.1" y="8.5" width="3.4" height="3.4" rx="1"/></g><path d="M6.5 3v3M2.2 8.5V6h8.6v2.5M6.5 6v2.5" stroke="#b3b3b3" stroke-width="1" fill="none"/></svg>
<svg class="a" style="left:1335px;top:1212px" width="13" height="13" viewBox="0 0 13 13"><g fill="#b3b3b3"><rect x="4.8" y="0.5" width="3.4" height="3.4" rx="1"/><rect x="0.5" y="8.5" width="3.4" height="3.4" rx="1"/><rect x="4.8" y="8.5" width="3.4" height="3.4" rx="1"/><rect x="9.1" y="8.5" width="3.4" height="3.4" rx="1"/></g><path d="M6.5 3v3M2.2 8.5V6h8.6v2.5M6.5 6v2.5" stroke="#b3b3b3" stroke-width="1" fill="none"/></svg>
<svg class="a" style="left:1507px;top:1212px" width="13" height="13" viewBox="0 0 13 13"><g fill="#b3b3b3"><rect x="4.8" y="0.5" width="3.4" height="3.4" rx="1"/><rect x="0.5" y="8.5" width="3.4" height="3.4" rx="1"/><rect x="4.8" y="8.5" width="3.4" height="3.4" rx="1"/><rect x="9.1" y="8.5" width="3.4" height="3.4" rx="1"/></g><path d="M6.5 3v3M2.2 8.5V6h8.6v2.5M6.5 6v2.5" stroke="#b3b3b3" stroke-width="1" fill="none"/></svg>
<svg class="a" style="left:1686px;top:1212px" width="13" height="13" viewBox="0 0 13 13"><g fill="#b3b3b3"><rect x="4.8" y="0.5" width="3.4" height="3.4" rx="1"/><rect x="0.5" y="8.5" width="3.4" height="3.4" rx="1"/><rect x="4.8" y="8.5" width="3.4" height="3.4" rx="1"/><rect x="9.1" y="8.5" width="3.4" height="3.4" rx="1"/></g><path d="M6.5 3v3M2.2 8.5V6h8.6v2.5M6.5 6v2.5" stroke="#b3b3b3" stroke-width="1" fill="none"/></svg>
<div class="t" style="left:574px;top:1214px;font-size:11.8px;color:#111;">shared name</div>
<div class="t" style="left:706px;top:1214px;font-size:11.8px;color:#111;">name</div>
<div class="t" style="left:799px;top:1214px;font-size:11.8px;color:#111;">id</div>
<div class="t" style="left:874px;top:1214px;font-size:11.8px;color:#111;">label</div>
<div class="t" style="left:964px;top:1214px;font-size:11.8px;color:#111;">AverageShortestPathLength</div>
<div class="t" style="left:1178px;top:1214px;font-size:11.8px;color:#111;">BetweennessCentrality</div>
<div class="t" style="left:1362px;top:1214px;font-size:11.8px;color:#111;">ClosenessCentrality</div>
<div class="t" style="left:1535px;top:1214px;font-size:11.8px;color:#111;">ClusteringCoefficient</div>
<div class="a" style="left:1693px;top:1207px;width:16px;height:129px;background:#fff"></div>
<div class="a" style="left:527px;top:1231px;width:1166px;height:90px;overflow:hidden">
<div class="t" style="left:6px;top:1px;font-size:11.6px;color:#111;">813</div>
<div class="t" style="left:156px;top:1px;font-size:11.6px;color:#111;">813</div>
<div class="t" style="left:246px;top:1px;font-size:11.6px;color:#111;">813</div>
<div class="t" style="left:321px;top:1px;font-size:11.6px;color:#111;">YKR026C</div>
<div class="t" style="right:555px;top:1px;font-size:11.6px;color:#111">15.37096774</div>
<div class="t" style="right:369.5px;top:1px;font-size:11.6px;color:#111">0.0</div>
<div class="t" style="right:197.5px;top:1px;font-size:11.6px;color:#111">0.06505771</div>
<div class="t" style="right:18.5px;top:1px;font-size:11.6px;color:#111">0.0</div>
<div class="t" style="left:6px;top:17px;font-size:11.6px;color:#111;">811</div>
<div class="t" style="left:156px;top:17px;font-size:11.6px;color:#111;">811</div>
<div class="t" style="left:246px;top:17px;font-size:11.6px;color:#111;">811</div>
<div class="t" style="left:321px;top:17px;font-size:11.6px;color:#111;">YGL122C</div>
<div class="t" style="right:555px;top:17px;font-size:11.6px;color:#111">14.375</div>
<div class="t" style="right:369.5px;top:17px;font-size:11.6px;color:#111">0.02406295</div>
<div class="t" style="right:197.5px;top:17px;font-size:11.6px;color:#111">0.06956522</div>
<div class="t" style="right:18.5px;top:17px;font-size:11.6px;color:#111">0.0</div>
<div class="t" style="left:6px;top:33px;font-size:11.6px;color:#111;">809</div>
<div class="t" style="left:156px;top:33px;font-size:11.6px;color:#111;">809</div>
<div class="t" style="left:246px;top:33px;font-size:11.6px;color:#111;">809</div>
<div class="t" style="left:321px;top:33px;font-size:11.6px;color:#111;">YGR218W</div>
<div class="t" style="right:555px;top:33px;font-size:11.6px;color:#111">1.66666667</div>
<div class="t" style="right:369.5px;top:33px;font-size:11.6px;color:#111">0.0</div>
<div class="t" style="right:197.5px;top:33px;font-size:11.6px;color:#111">0.6</div>
<div class="t" style="right:18.5px;top:33px;font-size:11.6px;color:#111">0.0</div>
<div class="t" style="left:6px;top:49px;font-size:11.6px;color:#111;">807</div>
<div class="t" style="left:156px;top:49px;font-size:11.6px;color:#111;">807</div>
<div class="t" style="left:246px;top:49px;font-size:11.6px;color:#111;">807</div>
<div class="t" style="left:321px;top:49px;font-size:11.6px;color:#111;">YGL097W</div>
<div class="t" style="right:555px;top:49px;font-size:11.6px;color:#111">1.0</div>
<div class="t" style="right:369.5px;top:49px;font-size:11.6px;color:#111">1.0</div>
<div class="t" style="right:197.5px;top:49px;font-size:11.6px;color:#111">1.0</div>
<div class="t" style="right:18.5px;top:49px;font-size:11.6px;color:#111">0.0</div>
<div class="t" style="left:6px;top:65px;font-size:11.6px;color:#111;">805</div>
<div class="t" style="left:156px;top:65px;font-size:11.6px;color:#111;">805</div>
<div class="t" style="left:246px;top:65px;font-size:11.6px;color:#111;">805</div>
<div class="t" style="left:321px;top:65px;font-size:11.6px;color:#111;">YOR204W</div>
<div class="t" style="right:555px;top:65px;font-size:11.6px;color:#111">1.66666667</div>
<div class="t" style="right:369.5px;top:65px;font-size:11.6px;color:#111">0.0</div>
<div class="t" style="right:197.5px;top:65px;font-size:11.6px;color:#111">0.6</div>
<div class="t" style="right:18.5px;top:65px;font-size:11.6px;color:#111">0.0</div>
<div class="t" style="left:6px;top:81px;font-size:11.6px;color:#111;">803</div>
<div class="t" style="left:156px;top:81px;font-size:11.6px;color:#111;">803</div>
<div class="t" style="left:246px;top:81px;font-size:11.6px;color:#111;">803</div>
<div class="t" style="left:321px;top:81px;font-size:11.6px;color:#111;">YLR249W</div>
<div class="t" style="right:555px;top:81px;font-size:11.6px;color:#111">1.33333333</div>
<div class="t" style="right:369.5px;top:81px;font-size:11.6px;color:#111">0.16666667</div>
<div class="t" style="right:197.5px;top:81px;font-size:11.6px;color:#111">0.75</div>
<div class="t" style="right:18.5px;top:81px;font-size:11.6px;color:#111">0.0</div>
</div>
<div class="a" style="left:507px;top:1321px;width:1186px;height:15px;background:#f9f9f9;border-top:1px solid #e6e6e6"></div>
<div class="a" style="left:507px;top:1321px;width:19px;height:15px;background:#fff"></div>
<div class="a" style="left:528px;top:1324px;width:326px;height:8px;background:#c3c3c3;border-radius:4px"></div>
<div class="a" style="left:1697px;top:1233px;width:7px;height:17px;background:#c3c3c3;border-radius:3.5px"></div>
<svg class="a" style="left:39px;top:1344px" width="16" height="13" viewBox="0 0 16 13"><rect x="0.5" y="0.5" width="15" height="12" rx="1.5" fill="#3d3d3d"/><path d="M3 3l3 2.5L3 8" stroke="#fff" stroke-width="1.2" fill="none"/><rect x="7.5" y="8" width="4" height="1.5" fill="#bbb"/></svg>
<div class="t" style="left:59px;top:1345px;font-size:14px;color:#444;">Command Line</div>
<div class="a" style="left:1359px;top:1337px;width:111px;height:28px;background:#cdcdcd"></div>
<svg class="a" style="left:1369px;top:1343px" width="16" height="15" viewBox="0 0 16 15"><g fill="none" stroke="#222" stroke-width="1.2"><rect x="1" y="1" width="11" height="10"/><path d="M1 4h11M1 7.5h11M5 1v10M8.5 1v10"/></g><circle cx="11.5" cy="11" r="3.6" fill="#000"/></svg>
<div class="t" style="left:1389px;top:1345px;font-size:14px;color:#111;">Node Table</div>
<svg class="a" style="left:1480px;top:1343px" width="17" height="16" viewBox="0 0 17 16"><g fill="none" stroke="#555" stroke-width="1.2"><rect x="1" y="1" width="11" height="10"/><path d="M1 4h11M1 7.5h11M5 1v10M8.5 1v10"/></g><path d="M9 14l5-6" stroke="#555" stroke-width="2"/></svg>
<div class="t" style="left:1500px;top:1345px;font-size:14px;color:#555;">Edge Table</div>
<svg class="a" style="left:1588px;top:1343px" width="19" height="16" viewBox="0 0 19 16"><g fill="none" stroke="#555" stroke-width="1.2"><rect x="1" y="1" width="11" height="10"/><path d="M1 4h11M1 7.5h11M5 1v10M8.5 1v10"/></g><g fill="#555"><circle cx="14.5" cy="7" r="1.8"/><circle cx="10" cy="10" r="1.8"/><circle cx="14.5" cy="13.5" r="1.8"/></g><path d="M14.5 7L10 10l4.5 3.5" stroke="#555" stroke-width="1.2" fill="none"/></svg>
<div class="t" style="left:1608px;top:1345px;font-size:14px;color:#555;">Network Table</div>
<div class="a" style="left:11px;top:1371px;width:40px;height:24px;background:#f6f6f6;border:1px solid #b0b0b0"></div>
<svg class="a" style="left:23px;top:1376px" width="17" height="13" viewBox="0 0 17 13"><path d="M4 12a3.5 3.5 0 0 1-.5-7 4.8 4.8 0 0 1 9.3-1A3.7 3.7 0 0 1 13 12z" fill="#000"/></svg>
<div class="a" style="left:65px;top:1371px;width:40px;height:24px;background:#f6f6f6;border:1px solid #b0b0b0"></div>
<svg class="a" style="left:77px;top:1377px" width="15" height="12" viewBox="0 0 15 12"><g fill="#000"><circle cx="1.8" cy="1.8" r="1.4"/><circle cx="1.8" cy="6" r="1.4"/><circle cx="1.8" cy="10.2" r="1.4"/><rect x="4.5" y="0.8" width="10" height="2"/><rect x="4.5" y="5" width="10" height="2"/><rect x="4.5" y="9.2" width="10" height="2"/></g></svg>
<div class="a" style="left:1671px;top:1371px;width:28px;height:24px;background:#f6f6f6;border:1px solid #b0b0b0"></div>
<svg class="a" style="left:1678px;top:1375px" width="14" height="15" viewBox="0 0 14 15"><rect x="3" y="0.8" width="8" height="13" rx="0.8" fill="#0d8a2e"/><g stroke="#4daf63" stroke-width="1"><path d="M0 2.5h2.5M0 5h2.5M0 7.5h2.5M0 10h2.5M0 12.5h2.5M11.5 2.5H14M11.5 5H14M11.5 7.5H14M11.5 10H14M11.5 12.5H14"/></g></svg>
</div>
<div class="a" style="left:0;top:0;width:1px;height:1401px;background:#000"></div>
<div class="a" style="left:0;top:0;width:1710px;height:1px;background:#000"></div>
</body></html>
